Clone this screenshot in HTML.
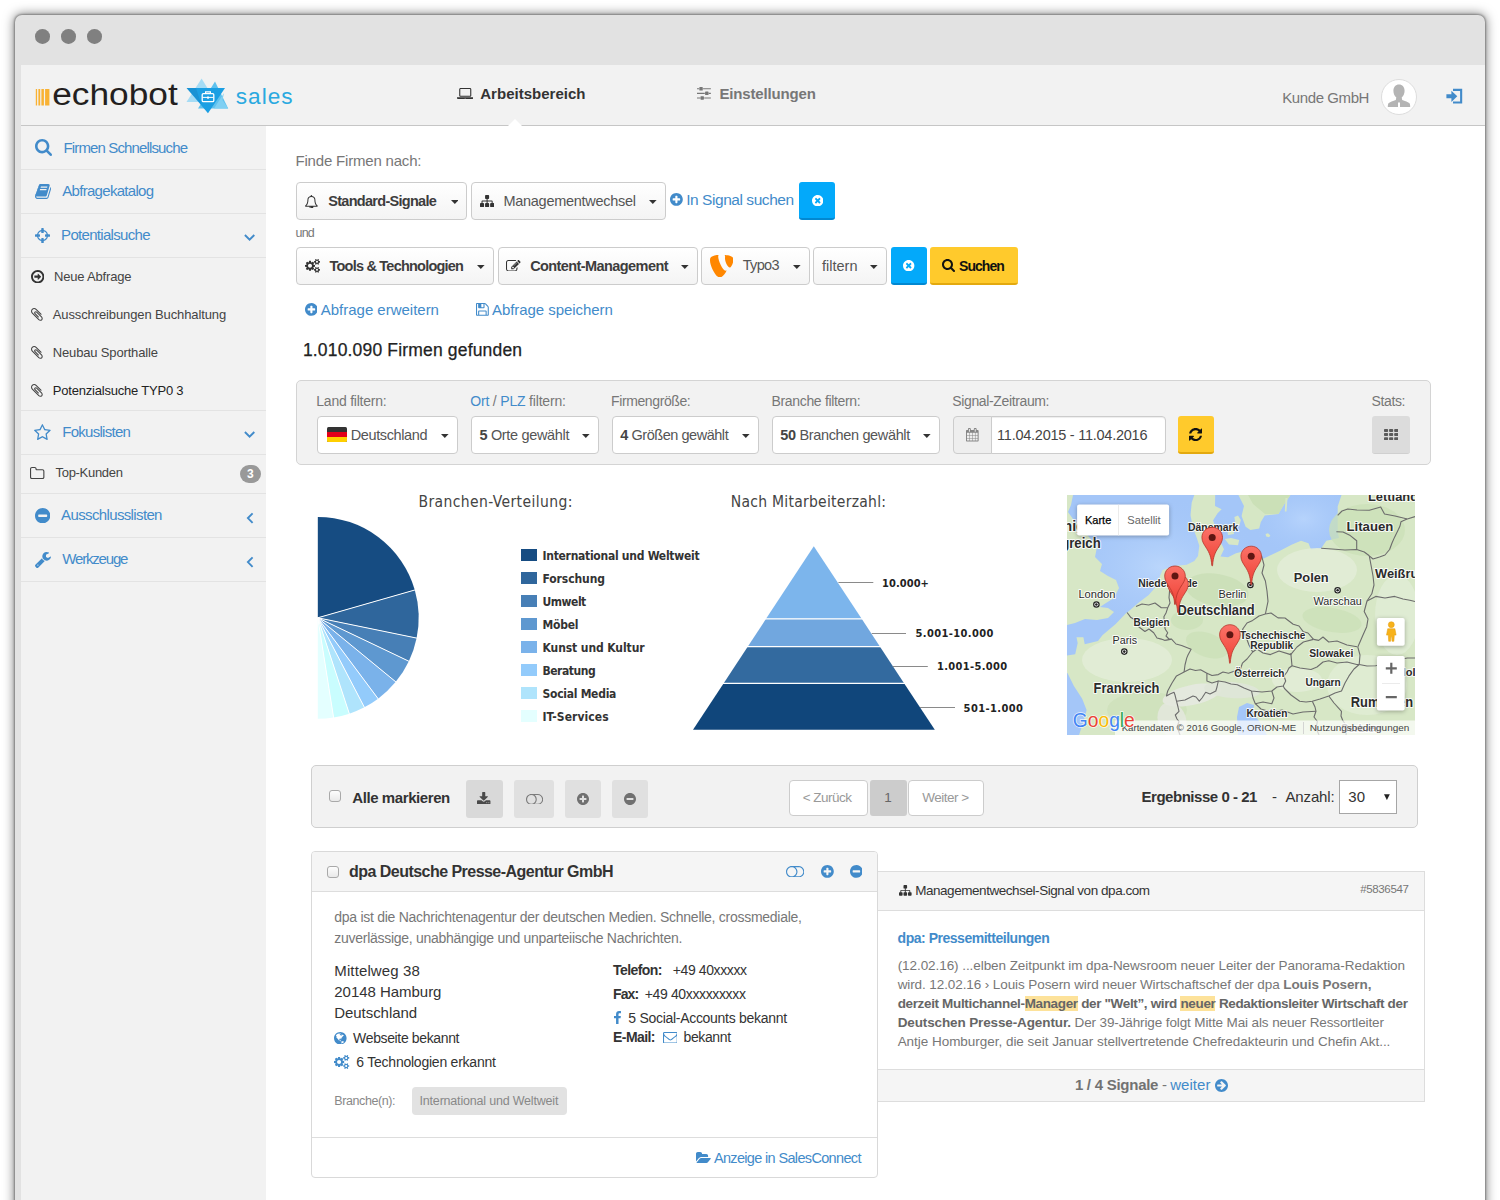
<!DOCTYPE html>
<html lang="de"><head><meta charset="utf-8"><title>echobot sales</title>
<style>
html,body{margin:0;padding:0;background:#fff;}
body{width:1500px;height:1200px;overflow:hidden;font-family:"Liberation Sans",sans-serif;}
#page{position:relative;width:1500px;height:1200px;overflow:hidden;}
#page>*{position:absolute;margin:0;padding:0;}
#page>svg{display:block;}
.t{white-space:nowrap;text-decoration:none;font-weight:400;}
.t b{font-weight:700;}

</style></head>
<body>
<div id="page">
<div style="left:15px;top:15px;width:1470px;height:1200px;background:#e2e2e2;border-radius:7px 7px 0 0;box-shadow:0 0 11px 1px rgba(0,0,0,.5),0 0 2px 1px rgba(0,0,0,.3);"></div>
<div style="left:35.300000000000004px;top:28.999999999999996px;width:14.6px;height:14.6px;background:#808080;border-radius:50%;"></div>
<div style="left:61.3px;top:28.999999999999996px;width:14.6px;height:14.6px;background:#808080;border-radius:50%;"></div>
<div style="left:87.3px;top:28.999999999999996px;width:14.6px;height:14.6px;background:#808080;border-radius:50%;"></div>
<header style="left:21px;top:65px;width:1464px;height:60px;background:#f2f2f2;border-bottom:1px solid #c6c6c6;"></header>
<main style="left:266px;top:126px;width:1219px;height:1080px;background:#fff;"></main>
<nav style="left:21px;top:126px;width:245px;height:1080px;background:#f2f2f2;"></nav>
<svg style="left:508px;top:119px" width="14" height="7" viewBox="0 0 14 7"><path d="M0 7L7 0L14 7Z" fill="#fff"/></svg>
<svg style="left:35px;top:88px" width="16" height="19" viewBox="35 88 16 19"><path d="M35.8 89h1.3v16.500h-1.300zM38.400 89h1.800v16.500h-1.800zM41.400 89h2.500v16.500h-2.500zM45.100 89h4.300v16.500h-4.300z" fill="#f9b233"/></svg>
<svg style="left:50px;top:76px" width="135" height="36" viewBox="0 0 135 36"><defs><clipPath id="lc"><rect x="0" y="8.2" width="135" height="28"/></clipPath></defs><text clip-path="url(#lc)" x="2.2" y="29.2" font-family="Liberation Sans, sans-serif" font-size="31" fill="#231f20" textLength="125.5" lengthAdjust="spacingAndGlyphs">echobot</text></svg>
<svg style="left:184px;top:76px" width="48" height="40" viewBox="184 76 48 40">
<polygon points="201.6,78.4 186.5,102 216,102" fill="#a6dcf5"/>
<polygon points="215,81.6 198,108.6 228.2,108.6" fill="#5ec1ee"/>
<polygon points="224,93 214,108.6 228.2,108.6 222.5,100" fill="#7fd0f3"/>
<polygon points="186.6,88 225,88 208,113.2" fill="#1b9fe3"/>
<polygon points="186.6,88 196,88 201,104" fill="#1787c9" opacity=".55"/>
<rect x="202.2" y="93.6" width="11.6" height="8" rx="1.2" fill="none" stroke="#fff" stroke-width="1.3"/>
<path d="M205.6 93.4v-1.6h4.8v1.6" fill="none" stroke="#fff" stroke-width="1.2"/>
<path d="M202.4 97.4h11.2" stroke="#fff" stroke-width="1"/>
<rect x="207" y="96.6" width="2" height="2" fill="#fff"/>
</svg>
<span class="t" style="left:235.81px;top:82px;font-size:22.6px;line-height:29px;color:#2aa9e0;letter-spacing:1.012px;">sales</span>
<svg style="left:456.65px;top:88px;" width="16.5" height="11" viewBox="0 256 1920 1280" preserveAspectRatio="none"><path fill="#333" d="M416 1280H1504C1592 1280 1664 1208 1664 1120V416C1664 328 1592 256 1504 256H416C328 256 256 328 256 416V1120C256 1208 328 1280 416 1280ZM384 416C384 399 399 384 416 384H1504C1521 384 1536 399 1536 416V1120C1536 1137 1521 1152 1504 1152H416C399 1152 384 1137 384 1120ZM1760 1344H160H0V1440C0 1493 72 1536 160 1536H1760C1848 1536 1920 1493 1920 1440V1344ZM1040 1440H880C871 1440 864 1433 864 1424C864 1415 871 1408 880 1408H1040C1049 1408 1056 1415 1056 1424C1056 1433 1049 1440 1040 1440Z"/></svg>
<span class="t" style="left:480.28px;top:84px;font-size:15px;line-height:19px;color:#333;font-weight:700;letter-spacing:0.012px;">Arbeitsbereich</span>
<svg style="left:697.07px;top:87.3px;" width="13.86" height="12.7" viewBox="0 256 1536 1408" preserveAspectRatio="none"><path fill="#777" d="M352 1408H0V1536H352ZM704 1280H448C413 1280 384 1309 384 1344V1600C384 1635 413 1664 448 1664H704C739 1664 768 1635 768 1600V1344C768 1309 739 1280 704 1280ZM864 896H0V1024H864ZM224 384H0V512H224ZM1536 1408H800V1536H1536ZM576 256H320C285 256 256 285 256 320V576C256 611 285 640 320 640H576C611 640 640 611 640 576V320C640 285 611 256 576 256ZM1216 768H960C925 768 896 797 896 832V1088C896 1123 925 1152 960 1152H1216C1251 1152 1280 1123 1280 1088V832C1280 797 1251 768 1216 768ZM1536 896H1312V1024H1536ZM1536 384H672V512H1536Z"/></svg>
<span class="t" style="left:719.48px;top:84px;font-size:15px;line-height:19px;color:#777;font-weight:700;letter-spacing:-0.154px;">Einstellungen</span>
<span class="t" style="left:1282.27px;top:88px;font-size:15px;line-height:19px;color:#777;letter-spacing:-0.410px;">Kunde GmbH</span>
<div style="left:1380.5px;top:78.5px;width:36px;height:36px;background:#fff;border:1px solid #ddd;border-radius:50%;box-sizing:border-box;overflow:hidden;"><svg width="34" height="34" viewBox="0 0 34 34" style="position:absolute;left:0;top:0"><path d="M17 4.5c-3.4 0-5.6 2.600-5.600 6.200 0 2.800 1.200 5.400 2.900 6.800l-.5 2.400c-2.400 1-6.400 2-7.300 3.400-.6 1-.7 2.600-.7 3.700h22.400c0-1.100-.1-2.700-.7-3.700-.9-1.400-4.900-2.400-7.300-3.400l-.5-2.400c1.700-1.400 2.900-4 2.900-6.800 0-3.600-2.200-6.200-5.600-6.200z" fill="#b4b4b4"/><path d="M16 22.600h2v4.400h-2z" fill="#fff"/></svg></div>
<svg style="left:1445px;top:87px" width="19" height="19" viewBox="1445 87 19 19"><path d="M1453 88.800h9.200v14.800h-9.200v-2.100h7.100v-10.600h-7.100zM1446.400 94.300h5v-3.600l5.900 5.600-5.900 5.600v-3.600h-5z" fill="#428bca"/></svg>
<div style="left:21px;top:169px;width:245px;height:1px;background:#e3e3e3;"></div>
<div style="left:21px;top:213px;width:245px;height:1px;background:#e3e3e3;"></div>
<div style="left:21px;top:257px;width:245px;height:1px;background:#e3e3e3;"></div>
<div style="left:21px;top:410px;width:245px;height:1px;background:#e3e3e3;"></div>
<div style="left:21px;top:454px;width:245px;height:1px;background:#e3e3e3;"></div>
<div style="left:21px;top:493px;width:245px;height:1px;background:#e3e3e3;"></div>
<div style="left:21px;top:537px;width:245px;height:1px;background:#e3e3e3;"></div>
<div style="left:21px;top:581px;width:245px;height:1px;background:#e3e3e3;"></div>
<svg style="left:35px;top:139px;" width="17" height="17" viewBox="0 128 1664 1664" preserveAspectRatio="none"><path fill="#428bca" d="M1152 832C1152 1079 951 1280 704 1280C457 1280 256 1079 256 832C256 585 457 384 704 384C951 384 1152 585 1152 832ZM1664 1664C1664 1630 1650 1597 1627 1574L1284 1231C1365 1114 1408 974 1408 832C1408 443 1093 128 704 128C315 128 0 443 0 832C0 1221 315 1536 704 1536C846 1536 986 1493 1103 1412L1446 1754C1469 1778 1502 1792 1536 1792C1606 1792 1664 1734 1664 1664Z"/></svg>
<a class="t" style="left:63.48px;top:138px;font-size:15px;line-height:19px;color:#428bca;letter-spacing:-0.859px;">Firmen Schnellsuche</a>
<svg style="left:34.57px;top:184px;" width="16.26" height="15" viewBox="-0.262509 128 1664.38 1536" preserveAspectRatio="none"><path fill="#428bca" d="M1639 478C1624 458 1603 444 1580 435C1581 453 1581 473 1575 492L1275 1479C1264 1515 1221 1536 1184 1536H261C206 1536 137 1524 117 1466C109 1444 110 1435 118 1423C127 1411 143 1408 156 1408H1025C1152 1408 1178 1374 1225 1220L1499 314C1513 267 1507 220 1481 184C1456 149 1414 128 1367 128H606C589 128 572 133 555 137L556 134C429 98 421 235 379 297C363 320 339 340 335 359C332 377 342 394 340 411C334 464 294 559 270 592C255 612 233 622 226 645C220 661 230 684 228 705C223 752 188 841 161 887C151 905 132 919 127 938C122 955 132 977 127 996C116 1048 82 1129 52 1179C36 1206 15 1223 11 1247C9 1259 18 1272 17 1288C16 1312 12 1332 10 1352C-4 1390 -4 1434 12 1479C49 1583 158 1664 260 1664H1183C1269 1664 1357 1598 1382 1513L1657 607C1671 561 1664 514 1639 478ZM575 480 596 416C602 398 621 384 638 384H1246C1264 384 1274 398 1268 416L1247 480C1241 498 1222 512 1205 512H597C579 512 569 498 575 480ZM492 736 513 672C519 654 538 640 555 640H1163C1181 640 1191 654 1185 672L1164 736C1158 754 1139 768 1122 768H514C496 768 486 754 492 736Z"/></svg>
<a class="t" style="left:62.27px;top:181px;font-size:15px;line-height:19px;color:#428bca;letter-spacing:-0.700px;">Abfragekatalog</a>
<svg style="left:34.7px;top:228px;" width="15" height="15" viewBox="0 128 1536 1536" preserveAspectRatio="none"><path fill="#428bca" d="M1197 1024C1154 1168 1040 1282 896 1325V1216C896 1181 867 1152 832 1152H704C669 1152 640 1181 640 1216V1325C496 1282 382 1168 339 1024H448C483 1024 512 995 512 960V832C512 797 483 768 448 768H339C382 624 496 510 640 467V576C640 611 669 640 704 640H832C867 640 896 611 896 576V467C1040 510 1154 624 1197 768H1088C1053 768 1024 797 1024 832V960C1024 995 1053 1024 1088 1024H1197ZM1536 832C1536 797 1507 768 1472 768H1329C1280 553 1111 384 896 335V192C896 157 867 128 832 128H704C669 128 640 157 640 192V335C425 384 256 553 207 768H64C29 768 0 797 0 832V960C0 995 29 1024 64 1024H207C256 1239 425 1408 640 1457V1600C640 1635 669 1664 704 1664H832C867 1664 896 1635 896 1600V1457C1111 1408 1280 1239 1329 1024H1472C1507 1024 1536 995 1536 960Z"/></svg>
<a class="t" style="left:61.08px;top:225px;font-size:15px;line-height:19px;color:#428bca;letter-spacing:-0.693px;">Potentialsuche</a>
<svg style="left:242px;top:232px" width="16" height="12" viewBox="242 232 16 12"><path d="M244.9 235l4.7 4.7 4.7-4.7" fill="none" stroke="#428bca" stroke-width="1.9"/></svg>
<svg style="left:30.5px;top:269.6px;" width="13.4" height="13.4" viewBox="0 128 1536 1536" preserveAspectRatio="none"><path fill="#333" d="M1152 896C1152 888 1149 879 1143 873L824 554C817 548 809 544 800 544C782 544 768 558 768 576V768H416C399 768 384 783 384 800V992C384 1009 399 1024 416 1024H768V1216C768 1233 783 1248 800 1248C808 1248 817 1245 823 1239L1143 919C1149 913 1152 904 1152 896ZM1312 896C1312 1196 1068 1440 768 1440C468 1440 224 1196 224 896C224 596 468 352 768 352C1068 352 1312 596 1312 896ZM1536 896C1536 472 1192 128 768 128C344 128 0 472 0 896C0 1320 344 1664 768 1664C1192 1664 1536 1320 1536 896Z"/></svg>
<a class="t" style="left:53.95px;top:268px;font-size:13px;line-height:17px;color:#444;letter-spacing:-0.174px;">Neue Abfrage</a>
<svg style="left:30.84px;top:307.8px;" width="11.72" height="12.8" viewBox="4 132 1400 1528" preserveAspectRatio="none"><path fill="#444" d="M1404 1385C1404 1297 1367 1212 1304 1150L723 569C684 529 630 506 574 506C464 506 378 592 378 702C378 757 401 812 441 851L851 1261C857 1267 865 1271 873 1271C894 1271 951 1214 951 1193C951 1185 947 1177 941 1171L531 761C516 745 506 724 506 702C506 663 535 635 573 635C595 635 617 644 633 659L1214 1240C1252 1278 1277 1330 1277 1385C1277 1470 1214 1533 1129 1533C1075 1533 1022 1508 984 1470L208 693C160 645 132 580 132 512C132 371 242 256 384 256C452 256 517 286 565 333L1171 940C1177 946 1185 950 1194 950C1215 950 1271 894 1271 873C1271 865 1267 857 1261 851L656 245C583 173 485 132 383 132C171 132 4 301 4 513C4 614 46 712 117 784L894 1560C956 1622 1041 1660 1129 1660C1285 1660 1404 1541 1404 1385Z"/></svg>
<a class="t" style="left:52.75px;top:306px;font-size:13px;line-height:17px;color:#444;letter-spacing:-0.114px;">Ausschreibungen Buchhaltung</a>
<svg style="left:30.84px;top:345.8px;" width="11.72" height="12.8" viewBox="4 132 1400 1528" preserveAspectRatio="none"><path fill="#444" d="M1404 1385C1404 1297 1367 1212 1304 1150L723 569C684 529 630 506 574 506C464 506 378 592 378 702C378 757 401 812 441 851L851 1261C857 1267 865 1271 873 1271C894 1271 951 1214 951 1193C951 1185 947 1177 941 1171L531 761C516 745 506 724 506 702C506 663 535 635 573 635C595 635 617 644 633 659L1214 1240C1252 1278 1277 1330 1277 1385C1277 1470 1214 1533 1129 1533C1075 1533 1022 1508 984 1470L208 693C160 645 132 580 132 512C132 371 242 256 384 256C452 256 517 286 565 333L1171 940C1177 946 1185 950 1194 950C1215 950 1271 894 1271 873C1271 865 1267 857 1261 851L656 245C583 173 485 132 383 132C171 132 4 301 4 513C4 614 46 712 117 784L894 1560C956 1622 1041 1660 1129 1660C1285 1660 1404 1541 1404 1385Z"/></svg>
<a class="t" style="left:52.75px;top:344px;font-size:13px;line-height:17px;color:#444;letter-spacing:-0.156px;">Neubau Sporthalle</a>
<svg style="left:30.84px;top:384.2px;" width="11.72" height="12.8" viewBox="4 132 1400 1528" preserveAspectRatio="none"><path fill="#444" d="M1404 1385C1404 1297 1367 1212 1304 1150L723 569C684 529 630 506 574 506C464 506 378 592 378 702C378 757 401 812 441 851L851 1261C857 1267 865 1271 873 1271C894 1271 951 1214 951 1193C951 1185 947 1177 941 1171L531 761C516 745 506 724 506 702C506 663 535 635 573 635C595 635 617 644 633 659L1214 1240C1252 1278 1277 1330 1277 1385C1277 1470 1214 1533 1129 1533C1075 1533 1022 1508 984 1470L208 693C160 645 132 580 132 512C132 371 242 256 384 256C452 256 517 286 565 333L1171 940C1177 946 1185 950 1194 950C1215 950 1271 894 1271 873C1271 865 1267 857 1261 851L656 245C583 173 485 132 383 132C171 132 4 301 4 513C4 614 46 712 117 784L894 1560C956 1622 1041 1660 1129 1660C1285 1660 1404 1541 1404 1385Z"/></svg>
<a class="t" style="left:52.75px;top:382px;font-size:13px;line-height:17px;color:#222;letter-spacing:-0.205px;">Potenzialsuche TYP0 3</a>
<svg style="left:34.41px;top:424px;" width="16.78" height="16" viewBox="0 32 1664 1587" preserveAspectRatio="none"><path fill="#428bca" d="M1137 1004 1209 1425 832 1226 454 1425 527 1004 221 707 643 645 832 263 1021 645 1443 707ZM1664 647C1664 617 1632 605 1608 601L1106 528L881 73C872 54 855 32 832 32C809 32 792 54 783 73L558 528L56 601C31 605 0 617 0 647C0 665 13 682 25 695L389 1049L303 1549C302 1556 301 1562 301 1569C301 1595 314 1619 343 1619C357 1619 370 1614 383 1607L832 1371L1281 1607C1293 1614 1307 1619 1321 1619C1350 1619 1362 1596 1362 1569C1362 1562 1362 1556 1361 1549L1275 1049L1638 695C1651 682 1664 665 1664 647Z"/></svg>
<a class="t" style="left:62.27px;top:422px;font-size:15px;line-height:19px;color:#428bca;letter-spacing:-0.727px;">Fokuslisten</a>
<svg style="left:242px;top:429px" width="16" height="12" viewBox="242 429 16 12"><path d="M244.9 432l4.7 4.7 4.7-4.7" fill="none" stroke="#428bca" stroke-width="1.9"/></svg>
<svg style="left:30.49px;top:467px;" width="14.42" height="12.2" viewBox="0 128 1664 1408" preserveAspectRatio="none"><path fill="#444" d="M1536 1312C1536 1365 1493 1408 1440 1408H224C171 1408 128 1365 128 1312V352C128 299 171 256 224 256H544C597 256 640 299 640 352V416C640 469 683 512 736 512H1440C1493 512 1536 555 1536 608V1312ZM1664 608C1664 485 1563 384 1440 384H768V352C768 229 667 128 544 128H224C101 128 0 229 0 352V1312C0 1435 101 1536 224 1536H1440C1563 1536 1664 1435 1664 1312Z"/></svg>
<a class="t" style="left:55.55px;top:464px;font-size:13px;line-height:17px;color:#444;letter-spacing:-0.303px;">Top-Kunden</a>
<div style="left:240px;top:465px;width:21px;height:17.6px;background:#999;border-radius:9px;"></div>
<span class="t" style="left:246.88px;top:466px;font-size:12px;line-height:16px;color:#fff;font-weight:700;">3</span>
<svg style="left:34.5px;top:508px;" width="15.4" height="15.4" viewBox="0 128 1536 1536" preserveAspectRatio="none"><path fill="#428bca" d="M1216 960C1216 995 1187 1024 1152 1024H384C349 1024 320 995 320 960V832C320 797 349 768 384 768H1152C1187 768 1216 797 1216 832V960ZM1536 896C1536 472 1192 128 768 128C344 128 0 472 0 896C0 1320 344 1664 768 1664C1192 1664 1536 1320 1536 896Z"/></svg>
<a class="t" style="left:61.08px;top:505px;font-size:15px;line-height:19px;color:#428bca;letter-spacing:-0.633px;">Ausschlusslisten</a>
<svg style="left:244px;top:511px" width="12" height="14" viewBox="244 511 12 14"><path d="M252.6 513.4l-4.700 4.700 4.700 4.700" fill="none" stroke="#428bca" stroke-width="1.900"/></svg>
<svg style="left:35.01px;top:552px;" width="15.98" height="16" viewBox="21 128 1641 1643" preserveAspectRatio="none"><path fill="#428bca" d="M384 1472C384 1507 355 1536 320 1536C285 1536 256 1507 256 1472C256 1437 285 1408 320 1408C355 1408 384 1437 384 1472ZM1028 1052C897 1000 792 895 740 764L59 1445C35 1469 21 1502 21 1536C21 1570 35 1603 59 1626L165 1734C189 1757 222 1771 256 1771C290 1771 323 1757 346 1734L1028 1052ZM1662 617C1662 597 1650 582 1630 582C1610 582 1378 728 1345 747L1152 640V416L1445 247C1454 241 1461 230 1461 219C1461 207 1455 198 1445 191C1384 150 1289 128 1216 128C969 128 768 329 768 576C768 823 969 1024 1216 1024C1405 1024 1576 901 1639 723C1650 691 1662 650 1662 617Z"/></svg>
<a class="t" style="left:62.27px;top:549px;font-size:15px;line-height:19px;color:#428bca;letter-spacing:-1.174px;">Werkzeuge</a>
<svg style="left:244px;top:555px" width="12" height="14" viewBox="244 555 12 14"><path d="M252.6 557.4l-4.700 4.700 4.700 4.700" fill="none" stroke="#428bca" stroke-width="1.900"/></svg>
<span class="t" style="left:295.48px;top:151px;font-size:15px;line-height:19px;color:#777;letter-spacing:-0.190px;">Finde Firmen nach:</span>
<div style="left:296px;top:182px;width:170.7px;height:38px;background:linear-gradient(#fff,#f4f4f4);border:1px solid #ccc;border-radius:4px;box-sizing:border-box;"></div>
<svg style="left:304.99px;top:194.6px;" width="12.82" height="13.8" viewBox="64 0 1664 1792" preserveAspectRatio="none"><path fill="#333" d="M912 1696C912 1705 905 1712 896 1712C799 1712 720 1633 720 1536C720 1527 727 1520 736 1520C745 1520 752 1527 752 1536C752 1615 817 1680 896 1680C905 1680 912 1687 912 1696ZM246 1408C425 1206 512 932 512 576C512 447 634 256 896 256C1158 256 1280 447 1280 576C1280 932 1367 1206 1546 1408ZM1728 1408C1580 1283 1408 1059 1408 576C1408 384 1249 174 984 135C989 123 992 110 992 96C992 43 949 0 896 0C843 0 800 43 800 96C800 110 803 123 808 135C543 174 384 384 384 576C384 1059 212 1283 64 1408C64 1478 122 1536 192 1536H640C640 1677 755 1792 896 1792C1037 1792 1152 1677 1152 1536H1600C1670 1536 1728 1478 1728 1408Z"/></svg>
<span class="t" style="left:328.29px;top:192px;font-size:14.5px;line-height:18px;color:#3d3d3d;font-weight:700;letter-spacing:-0.717px;">Standard-Signale</span>
<svg style="left:450.6px;top:200.2px" width="7.6" height="4" viewBox="0 0 8 4"><path d="M0 0h8L4 4z" fill="#333"/></svg>
<div style="left:471.2px;top:182px;width:194.8px;height:38px;background:linear-gradient(#fff,#f4f4f4);border:1px solid #ccc;border-radius:4px;box-sizing:border-box;"></div>
<svg style="left:479.6px;top:194.81px;" width="14.2" height="12.18" viewBox="0 128 1792 1536" preserveAspectRatio="none"><path fill="#333" d="M1792 1248C1792 1195 1749 1152 1696 1152H1600V960C1600 890 1542 832 1472 832H960V640H1056C1109 640 1152 597 1152 544V224C1152 171 1109 128 1056 128H736C683 128 640 171 640 224V544C640 597 683 640 736 640H832V832H320C250 832 192 890 192 960V1152H96C43 1152 0 1195 0 1248V1568C0 1621 43 1664 96 1664H416C469 1664 512 1621 512 1568V1248C512 1195 469 1152 416 1152H320V960H832V1152H736C683 1152 640 1195 640 1248V1568C640 1621 683 1664 736 1664H1056C1109 1664 1152 1621 1152 1568V1248C1152 1195 1109 1152 1056 1152H960V960H1472V1152H1376C1323 1152 1280 1195 1280 1248V1568C1280 1621 1323 1664 1376 1664H1696C1749 1664 1792 1621 1792 1568Z"/></svg>
<span class="t" style="left:503.49px;top:192px;font-size:14.5px;line-height:18px;color:#555;letter-spacing:-0.283px;">Managementwechsel</span>
<svg style="left:649.3px;top:200.2px" width="7.6" height="4" viewBox="0 0 8 4"><path d="M0 0h8L4 4z" fill="#333"/></svg>
<svg style="left:669.9px;top:193.4px;" width="12.8" height="12.8" viewBox="0 128 1536 1536" preserveAspectRatio="none"><path fill="#428bca" d="M1216 960C1216 995 1187 1024 1152 1024H896V1280C896 1315 867 1344 832 1344H704C669 1344 640 1315 640 1280V1024H384C349 1024 320 995 320 960V832C320 797 349 768 384 768H640V512C640 477 669 448 704 448H832C867 448 896 477 896 512V768H1152C1187 768 1216 797 1216 832V960ZM1536 896C1536 472 1192 128 768 128C344 128 0 472 0 896C0 1320 344 1664 768 1664C1192 1664 1536 1320 1536 896Z"/></svg>
<a class="t" style="left:686.16px;top:189px;font-size:15.5px;line-height:21px;color:#428bca;letter-spacing:-0.441px;">In Signal suchen</a>
<div style="left:799px;top:182px;width:36px;height:38px;background:#03a9fa;border-bottom:2px solid #0288d1;border-radius:3px;box-sizing:border-box;"></div>
<svg style="left:811.8px;top:195px;" width="11.4" height="11.4" viewBox="0 128 1536 1536" preserveAspectRatio="none"><path fill="#fff" d="M1149 1122C1149 1139 1142 1156 1130 1168L1040 1258C1028 1270 1011 1277 994 1277C977 1277 961 1270 949 1258L768 1077L587 1258C575 1270 559 1277 542 1277C525 1277 508 1270 496 1258L406 1168C394 1156 387 1139 387 1122C387 1105 394 1089 406 1077L587 896L406 715C394 703 387 687 387 670C387 653 394 636 406 624L496 534C508 522 525 515 542 515C559 515 575 522 587 534L768 715L949 534C961 522 977 515 994 515C1011 515 1028 522 1040 534L1130 624C1142 636 1149 653 1149 670C1149 687 1142 703 1130 715L949 896L1130 1077C1142 1089 1149 1105 1149 1122ZM1536 896C1536 472 1192 128 768 128C344 128 0 472 0 896C0 1320 344 1664 768 1664C1192 1664 1536 1320 1536 896Z"/></svg>
<span class="t" style="left:295.56px;top:225px;font-size:12.5px;line-height:16px;color:#777;letter-spacing:-0.830px;">und</span>
<div style="left:296px;top:247px;width:197.6px;height:38px;background:linear-gradient(#fff,#f4f4f4);border:1px solid #ccc;border-radius:4px;box-sizing:border-box;"></div>
<svg style="left:304.5px;top:259.12px;" width="15" height="13.76" viewBox="0 16 1920 1761" preserveAspectRatio="none"><path fill="#333" d="M896 896C896 1037 781 1152 640 1152C499 1152 384 1037 384 896C384 755 499 640 640 640C781 640 896 755 896 896ZM1664 1408C1664 1478 1607 1536 1536 1536C1466 1536 1408 1479 1408 1408C1408 1338 1466 1280 1536 1280C1606 1280 1664 1338 1664 1408ZM1664 384C1664 454 1607 512 1536 512C1466 512 1408 455 1408 384C1408 314 1466 256 1536 256C1606 256 1664 314 1664 384ZM1280 805C1280 791 1270 778 1256 775L1104 752C1095 724 1083 697 1070 670C1098 631 1128 595 1157 556C1161 550 1164 544 1164 537C1164 509 1046 401 1020 377C1014 372 1007 369 999 369C992 369 985 371 979 376L861 465C837 453 812 442 786 434L763 281C761 267 747 256 733 256H547C533 256 521 266 517 280C504 329 499 384 494 434C467 443 442 453 417 466L302 376C296 372 289 369 281 369C252 369 140 490 120 517C115 523 113 530 113 537C113 544 116 551 120 557C152 595 182 632 210 672C197 697 186 722 178 748L23 772C10 774 0 789 0 802V987C0 1001 10 1014 24 1016L176 1040C185 1068 197 1095 211 1122C182 1161 152 1198 123 1236C119 1242 116 1248 116 1255C116 1284 234 1391 260 1415C266 1420 273 1423 281 1423C288 1423 296 1421 301 1416L419 1327C443 1339 468 1350 494 1358L517 1511C519 1525 533 1536 547 1536H733C747 1536 759 1526 763 1512C776 1463 781 1408 786 1357C813 1349 838 1339 863 1326L978 1416C984 1420 991 1423 999 1423C1028 1423 1140 1301 1160 1274C1165 1269 1167 1262 1167 1255C1167 1247 1164 1241 1160 1235C1128 1197 1098 1160 1070 1120C1083 1095 1094 1070 1102 1044L1257 1020C1270 1018 1280 1003 1280 990ZM1920 1338C1920 1323 1791 1309 1771 1307C1763 1289 1753 1271 1741 1255C1750 1235 1792 1135 1792 1117C1792 1115 1791 1112 1788 1110C1776 1103 1669 1040 1664 1040L1658 1042C1624 1076 1594 1115 1566 1154C1556 1153 1546 1152 1536 1152C1526 1152 1516 1153 1506 1154C1496 1139 1421 1040 1408 1040C1403 1040 1296 1104 1284 1110C1281 1112 1280 1115 1280 1117C1280 1134 1322 1235 1331 1255C1319 1271 1309 1289 1301 1307C1281 1309 1152 1323 1152 1338V1478C1152 1493 1281 1507 1301 1509C1309 1528 1319 1545 1331 1561C1322 1581 1280 1682 1280 1699C1280 1701 1281 1704 1284 1706C1296 1713 1403 1777 1408 1777C1421 1777 1496 1677 1506 1662C1516 1663 1526 1664 1536 1664C1546 1664 1556 1663 1566 1662C1576 1677 1651 1777 1664 1777C1669 1777 1776 1713 1788 1706C1791 1704 1792 1702 1792 1699C1792 1681 1750 1581 1741 1561C1753 1545 1763 1528 1771 1509C1791 1507 1920 1493 1920 1478ZM1920 314C1920 299 1791 285 1771 283C1763 265 1753 247 1741 231C1750 211 1792 111 1792 93C1792 91 1791 88 1788 86C1776 79 1669 16 1664 16L1658 18C1624 52 1594 91 1566 130C1556 129 1546 128 1536 128C1526 128 1516 129 1506 130C1496 115 1421 16 1408 16C1403 16 1296 80 1284 86C1281 88 1280 91 1280 93C1280 110 1322 211 1331 231C1319 247 1309 265 1301 283C1281 285 1152 299 1152 314V454C1152 469 1281 483 1301 485C1309 504 1319 521 1331 537C1322 557 1280 658 1280 675C1280 677 1281 680 1284 682C1296 689 1403 753 1408 753C1421 753 1496 653 1506 638C1516 639 1526 640 1536 640C1546 640 1556 639 1566 638C1576 653 1651 753 1664 753C1669 753 1776 689 1788 682C1791 680 1792 678 1792 675C1792 657 1750 557 1741 537C1753 521 1763 504 1771 485C1791 483 1920 469 1920 454Z"/></svg>
<span class="t" style="left:329.49px;top:257px;font-size:14.5px;line-height:18px;color:#3d3d3d;font-weight:700;letter-spacing:-0.779px;">Tools &amp; Technologien</span>
<svg style="left:477.3px;top:265px" width="7.6" height="4" viewBox="0 0 8 4"><path d="M0 0h8L4 4z" fill="#333"/></svg>
<div style="left:498px;top:247px;width:200px;height:38px;background:linear-gradient(#fff,#f4f4f4);border:1px solid #ccc;border-radius:4px;box-sizing:border-box;"></div>
<svg style="left:506px;top:259.78px;" width="14.5" height="11.44" viewBox="0 128 1783.75 1408" preserveAspectRatio="none"><path fill="#333" d="M888 1184H832V1088H736V1032L852 916L1004 1068ZM1328 464C1337 473 1336 488 1327 497L977 847C968 856 953 857 944 848C935 839 936 824 945 815L1295 465C1304 456 1319 455 1328 464ZM1408 1058C1408 1045 1400 1034 1388 1029C1376 1024 1363 1026 1353 1036L1289 1100C1283 1106 1280 1114 1280 1122V1248C1280 1336 1208 1408 1120 1408H288C200 1408 128 1336 128 1248V416C128 328 200 256 288 256H1120C1135 256 1150 258 1165 262C1176 266 1188 263 1197 254L1246 205C1254 197 1257 187 1255 176C1253 166 1246 157 1237 153C1200 136 1160 128 1120 128H288C129 128 0 257 0 416V1248C0 1407 129 1536 288 1536H1120C1279 1536 1408 1407 1408 1248ZM1312 320 640 992V1280H928L1600 608ZM1756 452C1793 415 1793 353 1756 316L1604 164C1567 127 1505 127 1468 164L1376 256L1664 544L1756 452Z"/></svg>
<span class="t" style="left:530.19px;top:257px;font-size:14.5px;line-height:18px;color:#3d3d3d;font-weight:700;letter-spacing:-0.584px;">Content-Management</span>
<svg style="left:681.3px;top:265px" width="7.6" height="4" viewBox="0 0 8 4"><path d="M0 0h8L4 4z" fill="#333"/></svg>
<div style="left:701.3px;top:247px;width:108.3px;height:38px;background:linear-gradient(#fff,#f4f4f4);border:1px solid #ccc;border-radius:4px;box-sizing:border-box;"></div>
<svg style="left:709.5px;top:254.5px" width="23.5" height="22.6" viewBox="0 0 23.5 22.6"><path d="M16.600 15.500c-.35.1-.63.14-1 .14-3 0-7.400-10.400-7.400-13.900 0-1.300.3-1.700.73-2.100C5.300.07 1 1.400.3 3.100.1 3.600 0 4.400 0 5.400c0 5.400 5.800 17.100 9.900 17.100 1.900 0 5.100-3.100 6.700-7z" fill="#ff8700"/><path d="M14 0c3.800 0 9.500 1.100 9.500 4.200 0 3.800-2.400 8.400-3.600 8.400-2.200 0-4.900-6.100-4.900-9.100C15 1.600 15.500 0 14 0z" fill="#ff8700" transform="translate(0,0)"/></svg>
<span class="t" style="left:742.69px;top:256px;font-size:14.5px;line-height:18px;color:#555;letter-spacing:-0.675px;">Typo3</span>
<svg style="left:793.3px;top:265px" width="7.6" height="4" viewBox="0 0 8 4"><path d="M0 0h8L4 4z" fill="#333"/></svg>
<div style="left:813.3px;top:247px;width:73.4px;height:38px;background:linear-gradient(#fff,#f4f4f4);border:1px solid #ccc;border-radius:4px;box-sizing:border-box;"></div>
<span class="t" style="left:821.89px;top:257px;font-size:14.5px;line-height:18px;color:#555;letter-spacing:0.022px;">filtern</span>
<svg style="left:870px;top:265px" width="7.6" height="4" viewBox="0 0 8 4"><path d="M0 0h8L4 4z" fill="#333"/></svg>
<div style="left:891px;top:247px;width:36px;height:38px;background:#03a9fa;border-bottom:2px solid #0288d1;border-radius:3px;box-sizing:border-box;"></div>
<svg style="left:903.4px;top:260px;" width="11.4" height="11.4" viewBox="0 128 1536 1536" preserveAspectRatio="none"><path fill="#fff" d="M1149 1122C1149 1139 1142 1156 1130 1168L1040 1258C1028 1270 1011 1277 994 1277C977 1277 961 1270 949 1258L768 1077L587 1258C575 1270 559 1277 542 1277C525 1277 508 1270 496 1258L406 1168C394 1156 387 1139 387 1122C387 1105 394 1089 406 1077L587 896L406 715C394 703 387 687 387 670C387 653 394 636 406 624L496 534C508 522 525 515 542 515C559 515 575 522 587 534L768 715L949 534C961 522 977 515 994 515C1011 515 1028 522 1040 534L1130 624C1142 636 1149 653 1149 670C1149 687 1142 703 1130 715L949 896L1130 1077C1142 1089 1149 1105 1149 1122ZM1536 896C1536 472 1192 128 768 128C344 128 0 472 0 896C0 1320 344 1664 768 1664C1192 1664 1536 1320 1536 896Z"/></svg>
<div style="left:930px;top:247px;width:88px;height:38px;background:#ffca2c;border-bottom:2px solid #e3a90f;border-radius:3px;box-sizing:border-box;"></div>
<svg style="left:942.2px;top:259.3px;" width="13" height="13" viewBox="0 128 1664 1664" preserveAspectRatio="none"><path fill="#111" d="M1152 832C1152 1079 951 1280 704 1280C457 1280 256 1079 256 832C256 585 457 384 704 384C951 384 1152 585 1152 832ZM1664 1664C1664 1630 1650 1597 1627 1574L1284 1231C1365 1114 1408 974 1408 832C1408 443 1093 128 704 128C315 128 0 443 0 832C0 1221 315 1536 704 1536C846 1536 986 1493 1103 1412L1446 1754C1469 1778 1502 1792 1536 1792C1606 1792 1664 1734 1664 1664Z"/></svg>
<span class="t" style="left:959.01px;top:257px;font-size:14px;line-height:18px;color:#111;font-weight:700;letter-spacing:-0.956px;">Suchen</span>
<svg style="left:304.5px;top:303.4px;" width="12.8" height="12.8" viewBox="0 128 1536 1536" preserveAspectRatio="none"><path fill="#428bca" d="M1216 960C1216 995 1187 1024 1152 1024H896V1280C896 1315 867 1344 832 1344H704C669 1344 640 1315 640 1280V1024H384C349 1024 320 995 320 960V832C320 797 349 768 384 768H640V512C640 477 669 448 704 448H832C867 448 896 477 896 512V768H1152C1187 768 1216 797 1216 832V960ZM1536 896C1536 472 1192 128 768 128C344 128 0 472 0 896C0 1320 344 1664 768 1664C1192 1664 1536 1320 1536 896Z"/></svg>
<a class="t" style="left:320.78px;top:300px;font-size:15px;line-height:19px;color:#428bca;letter-spacing:-0.013px;">Abfrage erweitern</a>
<svg style="left:475.75px;top:303.4px;" width="12.8" height="12.8" viewBox="0 128 1536 1536" preserveAspectRatio="none"><path fill="#428bca" d="M384 1536V1152H1152V1536ZM1280 1536V1120C1280 1067 1237 1024 1184 1024H352C299 1024 256 1067 256 1120V1536H128V256H256V672C256 725 299 768 352 768H928C981 768 1024 725 1024 672V256C1044 256 1083 272 1097 286L1378 567C1391 580 1408 621 1408 640V1536ZM896 608C896 625 881 640 864 640H672C655 640 640 625 640 608V288C640 271 655 256 672 256H864C881 256 896 271 896 288V608ZM1536 640C1536 587 1506 514 1468 476L1188 196C1150 158 1077 128 1024 128H96C43 128 0 171 0 224V1568C0 1621 43 1664 96 1664H1440C1493 1664 1536 1621 1536 1568Z"/></svg>
<a class="t" style="left:491.98px;top:300px;font-size:15px;line-height:19px;color:#428bca;letter-spacing:-0.059px;">Abfrage speichern</a>
<h2 class="t" style="left:302.89px;top:339px;font-size:17.5px;line-height:22px;color:#222;letter-spacing:0.174px;-webkit-text-stroke:.25px #222;">1.010.090 Firmen gefunden</h2>
<div style="left:296px;top:380px;width:1135px;height:85px;background:#f2f2f2;border:1px solid #d4d4d4;border-radius:5px;box-sizing:border-box;"></div>
<span class="t" style="left:316.31px;top:392px;font-size:14px;line-height:18px;color:#777;letter-spacing:-0.231px;">Land filtern:</span>
<span class="t" style="left:470.31px;top:392px;font-size:14px;line-height:18px;color:#777;letter-spacing:-0.190px;"><span style="color:#428bca">Ort</span> / <span style="color:#428bca">PLZ</span> filtern:</span>
<span class="t" style="left:611.11px;top:392px;font-size:14px;line-height:18px;color:#777;letter-spacing:-0.403px;">Firmengröße:</span>
<span class="t" style="left:771.51px;top:392px;font-size:14px;line-height:18px;color:#777;letter-spacing:-0.331px;">Branche filtern:</span>
<span class="t" style="left:952.31px;top:392px;font-size:14px;line-height:18px;color:#777;letter-spacing:-0.367px;">Signal-Zeitraum:</span>
<span class="t" style="left:1371.51px;top:392px;font-size:14px;line-height:18px;color:#777;letter-spacing:-0.359px;">Stats:</span>
<div style="left:316.8px;top:416px;width:140.8px;height:38px;background:#fff;border:1px solid #ccc;border-radius:4px;box-sizing:border-box;"></div>
<svg style="left:327px;top:427px" width="20" height="15" viewBox="0 0 20 15"><rect width="20" height="15" rx="1.5" fill="#333"/><rect y="5" width="20" height="5" fill="#e2001a"/><rect y="10" width="20" height="5" rx="1.5" fill="#ffcf00"/><rect y="10" width="20" height="3" fill="#ffcf00"/></svg>
<span class="t" style="left:350.69px;top:426px;font-size:14.5px;line-height:18px;color:#555;letter-spacing:-0.381px;">Deutschland</span>
<svg style="left:441px;top:433.6px" width="7.6" height="4" viewBox="0 0 8 4"><path d="M0 0h8L4 4z" fill="#333"/></svg>
<div style="left:471.2px;top:416px;width:127.6px;height:38px;background:#fff;border:1px solid #ccc;border-radius:4px;box-sizing:border-box;"></div>
<span class="t" style="left:479.49px;top:426px;font-size:14.5px;line-height:18px;color:#555;letter-spacing:-0.333px;"><b style="color:#444">5</b> Orte gewählt</span>
<svg style="left:582px;top:433.6px" width="7.6" height="4" viewBox="0 0 8 4"><path d="M0 0h8L4 4z" fill="#333"/></svg>
<div style="left:612px;top:416px;width:147px;height:38px;background:#fff;border:1px solid #ccc;border-radius:4px;box-sizing:border-box;"></div>
<span class="t" style="left:620.29px;top:426px;font-size:14.5px;line-height:18px;color:#555;letter-spacing:-0.459px;"><b style="color:#444">4</b> Größen gewählt</span>
<svg style="left:742.4px;top:433.6px" width="7.6" height="4" viewBox="0 0 8 4"><path d="M0 0h8L4 4z" fill="#333"/></svg>
<div style="left:772px;top:416px;width:168px;height:38px;background:#fff;border:1px solid #ccc;border-radius:4px;box-sizing:border-box;"></div>
<span class="t" style="left:780.29px;top:426px;font-size:14.5px;line-height:18px;color:#555;letter-spacing:-0.347px;"><b style="color:#444">50</b> Branchen gewählt</span>
<svg style="left:923.2px;top:433.6px" width="7.6" height="4" viewBox="0 0 8 4"><path d="M0 0h8L4 4z" fill="#333"/></svg>
<div style="left:953px;top:416px;width:39px;height:38px;background:#eee;border:1px solid #ccc;border-radius:4px 0 0 4px;box-sizing:border-box;"></div>
<div style="left:991px;top:416px;width:175px;height:38px;background:#fff;border:1px solid #ccc;border-radius:0 4px 4px 0;box-sizing:border-box;box-shadow:inset 0 1px 1px rgba(0,0,0,.075);"></div>
<svg style="left:966.09px;top:428px;" width="12.62" height="13.6" viewBox="0 0 1664 1792" preserveAspectRatio="none"><path fill="#858585" d="M128 1664V1376H416V1664ZM480 1664V1376H800V1664ZM128 1312V992H416V1312ZM480 1312V992H800V1312ZM128 928V640H416V928ZM864 1664V1376H1184V1664ZM480 928V640H800V928ZM1248 1664V1376H1536V1664ZM864 1312V992H1184V1312ZM512 448C512 465 497 480 480 480H416C399 480 384 465 384 448V160C384 143 399 128 416 128H480C497 128 512 143 512 160V448ZM1248 1312V992H1536V1312ZM864 928V640H1184V928ZM1248 928V640H1536V928ZM1280 448C1280 465 1265 480 1248 480H1184C1167 480 1152 465 1152 448V160C1152 143 1167 128 1184 128H1248C1265 128 1280 143 1280 160V448ZM1664 384C1664 314 1606 256 1536 256H1408V160C1408 72 1336 0 1248 0H1184C1096 0 1024 72 1024 160V256H640V160C640 72 568 0 480 0H416C328 0 256 72 256 160V256H128C58 256 0 314 0 384V1664C0 1734 58 1792 128 1792H1536C1606 1792 1664 1734 1664 1664Z"/></svg>
<span class="t" style="left:997.09px;top:426px;font-size:14.5px;line-height:18px;color:#444;letter-spacing:-0.249px;">11.04.2015 - 11.04.2016</span>
<div style="left:1178px;top:416px;width:36px;height:38px;background:#ffca2c;border-bottom:2px solid #e3a90f;border-radius:3px;box-sizing:border-box;"></div>
<svg style="left:1189.2px;top:428px;" width="13.2" height="13.2" viewBox="0 128 1536 1536" preserveAspectRatio="none"><path fill="#111" d="M1511 1056C1511 1039 1497 1024 1479 1024H1287C1272 1024 1262 1033 1257 1047C1240 1087 1228 1125 1204 1164C1111 1316 946 1408 768 1408C639 1408 514 1358 420 1270L557 1133C569 1121 576 1105 576 1088C576 1053 547 1024 512 1024H64C29 1024 0 1053 0 1088V1536C0 1571 29 1600 64 1600C81 1600 97 1593 109 1581L238 1452C380 1587 569 1664 764 1664C1133 1664 1425 1417 1510 1063C1511 1061 1511 1058 1511 1056ZM1536 256C1536 221 1507 192 1472 192C1455 192 1439 199 1427 211L1297 340C1155 206 964 128 768 128C399 128 104 374 18 729C18 731 18 734 18 736C18 753 32 768 50 768H249C264 768 274 759 279 745C296 705 308 667 332 628C425 476 590 384 768 384C897 384 1022 433 1117 521L979 659C967 671 960 687 960 704C960 739 989 768 1024 768H1472C1507 768 1536 739 1536 704Z"/></svg>
<div style="left:1372px;top:416px;width:38px;height:38px;background:#dcdcdc;border-bottom:1px solid #d0d0d0;border-radius:3px;box-sizing:border-box;"></div>
<svg style="left:1383.67px;top:429.2px;" width="14.26" height="11.2" viewBox="0 128 1792 1408" preserveAspectRatio="none"><path fill="#5a5a5a" d="M512 1248C512 1195 469 1152 416 1152H96C43 1152 0 1195 0 1248V1440C0 1493 43 1536 96 1536H416C469 1536 512 1493 512 1440ZM512 736C512 683 469 640 416 640H96C43 640 0 683 0 736V928C0 981 43 1024 96 1024H416C469 1024 512 981 512 928ZM1152 1248C1152 1195 1109 1152 1056 1152H736C683 1152 640 1195 640 1248V1440C640 1493 683 1536 736 1536H1056C1109 1536 1152 1493 1152 1440ZM512 224C512 171 469 128 416 128H96C43 128 0 171 0 224V416C0 469 43 512 96 512H416C469 512 512 469 512 416ZM1152 736C1152 683 1109 640 1056 640H736C683 640 640 683 640 736V928C640 981 683 1024 736 1024H1056C1109 1024 1152 981 1152 928ZM1792 1248C1792 1195 1749 1152 1696 1152H1376C1323 1152 1280 1195 1280 1248V1440C1280 1493 1323 1536 1376 1536H1696C1749 1536 1792 1493 1792 1440ZM1152 224C1152 171 1109 128 1056 128H736C683 128 640 171 640 224V416C640 469 683 512 736 512H1056C1109 512 1152 469 1152 416ZM1792 736C1792 683 1749 640 1696 640H1376C1323 640 1280 683 1280 736V928C1280 981 1323 1024 1376 1024H1696C1749 1024 1792 981 1792 928ZM1792 224C1792 171 1749 128 1696 128H1376C1323 128 1280 171 1280 224V416C1280 469 1323 512 1376 512H1696C1749 512 1792 469 1792 416Z"/></svg>
<svg style="left:300px;top:500px" width="140" height="240" viewBox="300 500 140 240"><path d="M317.8 617.8L317.80 516.90A100.9 100.9 0 0 1 414.79 589.99Z" fill="#164c82"/><path d="M317.8 617.8L414.79 589.99A100.9 100.9 0 0 1 416.64 638.09Z" fill="#2f669c"/><path d="M317.8 617.8L416.64 638.09A100.9 100.9 0 0 1 408.87 661.24Z" fill="#477fb6"/><path d="M317.8 617.8L408.87 661.24A100.9 100.9 0 0 1 395.77 681.84Z" fill="#5e98d0"/><path d="M317.8 617.8L395.77 681.84A100.9 100.9 0 0 1 378.10 698.70Z" fill="#7ab2ea"/><path d="M317.8 617.8L378.10 698.70A100.9 100.9 0 0 1 364.39 707.30Z" fill="#93cbfb"/><path d="M317.8 617.8L364.39 707.30A100.9 100.9 0 0 1 349.31 713.65Z" fill="#afe4fc"/><path d="M317.8 617.8L349.31 713.65A100.9 100.9 0 0 1 333.58 717.46Z" fill="#c9fdfe"/><path d="M317.8 617.8L333.58 717.46A100.9 100.9 0 0 1 317.80 718.70Z" fill="#e4ffff"/><path d="M317.8 617.8L415.75 589.71" stroke="#fff" stroke-width="1" fill="none"/><path d="M317.8 617.8L417.62 638.29" stroke="#fff" stroke-width="1" fill="none"/><path d="M317.8 617.8L409.77 661.67" stroke="#fff" stroke-width="1" fill="none"/><path d="M317.8 617.8L396.54 682.48" stroke="#fff" stroke-width="1" fill="none"/><path d="M317.8 617.8L378.70 699.50" stroke="#fff" stroke-width="1" fill="none"/><path d="M317.8 617.8L364.85 708.19" stroke="#fff" stroke-width="1" fill="none"/><path d="M317.8 617.8L349.63 714.60" stroke="#fff" stroke-width="1" fill="none"/><path d="M317.8 617.8L333.74 718.45" stroke="#fff" stroke-width="1" fill="none"/></svg>
<span class="t" style="left:418.46px;top:492px;font-size:15.5px;line-height:20px;color:#444;font-family:'DejaVu Sans Condensed', 'DejaVu Sans', 'Liberation Sans', sans-serif;letter-spacing:0.399px;">Branchen-Verteilung:</span>
<div style="left:521px;top:549px;width:16px;height:12px;background:#164c82;"></div>
<span class="t" style="left:542.48px;top:548px;font-size:12px;line-height:16px;color:#333;font-weight:700;font-family:'DejaVu Sans Condensed', 'DejaVu Sans', 'Liberation Sans', sans-serif;letter-spacing:-0.271px;">International und Weltweit</span>
<div style="left:521px;top:572px;width:16px;height:12px;background:#2f669c;"></div>
<span class="t" style="left:542.48px;top:571px;font-size:12px;line-height:16px;color:#333;font-weight:700;font-family:'DejaVu Sans Condensed', 'DejaVu Sans', 'Liberation Sans', sans-serif;letter-spacing:-0.096px;">Forschung</span>
<div style="left:521px;top:595px;width:16px;height:12px;background:#477fb6;"></div>
<span class="t" style="left:542.48px;top:594px;font-size:12px;line-height:16px;color:#333;font-weight:700;font-family:'DejaVu Sans Condensed', 'DejaVu Sans', 'Liberation Sans', sans-serif;letter-spacing:-0.474px;">Umwelt</span>
<div style="left:521px;top:618px;width:16px;height:12px;background:#5e98d0;"></div>
<span class="t" style="left:542.48px;top:617px;font-size:12px;line-height:16px;color:#333;font-weight:700;font-family:'DejaVu Sans Condensed', 'DejaVu Sans', 'Liberation Sans', sans-serif;letter-spacing:-0.205px;">Möbel</span>
<div style="left:521px;top:641px;width:16px;height:12px;background:#7ab2ea;"></div>
<span class="t" style="left:542.48px;top:640px;font-size:12px;line-height:16px;color:#333;font-weight:700;font-family:'DejaVu Sans Condensed', 'DejaVu Sans', 'Liberation Sans', sans-serif;letter-spacing:-0.090px;">Kunst und Kultur</span>
<div style="left:521px;top:664px;width:16px;height:12px;background:#93cbfb;"></div>
<span class="t" style="left:542.48px;top:663px;font-size:12px;line-height:16px;color:#333;font-weight:700;font-family:'DejaVu Sans Condensed', 'DejaVu Sans', 'Liberation Sans', sans-serif;letter-spacing:-0.448px;">Beratung</span>
<div style="left:521px;top:687px;width:16px;height:12px;background:#afe4fc;"></div>
<span class="t" style="left:542.48px;top:686px;font-size:12px;line-height:16px;color:#333;font-weight:700;font-family:'DejaVu Sans Condensed', 'DejaVu Sans', 'Liberation Sans', sans-serif;letter-spacing:-0.265px;">Social Media</span>
<div style="left:521px;top:710px;width:16px;height:12px;background:#e4ffff;"></div>
<span class="t" style="left:542.48px;top:709px;font-size:12px;line-height:16px;color:#333;font-weight:700;font-family:'DejaVu Sans Condensed', 'DejaVu Sans', 'Liberation Sans', sans-serif;letter-spacing:0.078px;">IT-Services</span>
<span class="t" style="left:730.86px;top:492px;font-size:15.5px;line-height:20px;color:#444;font-family:'DejaVu Sans Condensed', 'DejaVu Sans', 'Liberation Sans', sans-serif;letter-spacing:0.259px;">Nach Mitarbeiterzahl:</span>
<svg style="left:690px;top:540px" width="280" height="195" viewBox="690 540 280 195"><path d="M813.80 546.2L813.80 546.2L861.65 618.8L766.03 618.8Z" fill="#7cb5ec"/><path d="M766.03 618.8L861.65 618.8L880.03 646.7L747.68 646.7Z" fill="#71a7df"/><path d="M747.68 646.7L880.03 646.7L904.22 683.4L723.53 683.4Z" fill="#336a9f"/><path d="M723.53 683.4L904.22 683.4L934.80 729.8L693.00 729.8Z" fill="#10467b"/><path d="M765.03 618.8H862.65" stroke="#fff" stroke-width="1.2"/><path d="M746.68 646.7H881.03" stroke="#fff" stroke-width="1.2"/><path d="M722.53 683.4H905.22" stroke="#fff" stroke-width="1.2"/><path d="M838.4 582.5H873.3" stroke="#8a8a8a" stroke-width="1"/><path d="M871.8 633.5H906" stroke="#8a8a8a" stroke-width="1"/><path d="M892.8 666.5H927.8" stroke="#8a8a8a" stroke-width="1"/><path d="M920 707.5H955" stroke="#8a8a8a" stroke-width="1"/></svg>
<span class="t" style="left:882.01px;top:576px;font-size:11px;line-height:15px;color:#222;font-weight:700;font-family:'DejaVu Sans Condensed', 'DejaVu Sans', 'Liberation Sans', sans-serif;letter-spacing:0.069px;">10.000+</span>
<span class="t" style="left:915.62px;top:626px;font-size:11px;line-height:15px;color:#222;font-weight:700;font-family:'DejaVu Sans Condensed', 'DejaVu Sans', 'Liberation Sans', sans-serif;letter-spacing:0.372px;">5.001-10.000</span>
<span class="t" style="left:936.91px;top:659px;font-size:11px;line-height:15px;color:#222;font-weight:700;font-family:'DejaVu Sans Condensed', 'DejaVu Sans', 'Liberation Sans', sans-serif;letter-spacing:0.358px;">1.001-5.000</span>
<span class="t" style="left:963.62px;top:701px;font-size:11px;line-height:15px;color:#222;font-weight:700;font-family:'DejaVu Sans Condensed', 'DejaVu Sans', 'Liberation Sans', sans-serif;letter-spacing:0.403px;">501-1.000</span>
<svg style="left:1067px;top:495px" width="348" height="240" viewBox="0 0 348 240"><defs><radialGradient id="sea1" cx="0.27" cy="0.3" r="0.3"><stop offset="0" stop-color="#bad6fc"/><stop offset="1" stop-color="#a4c6f8" stop-opacity="0"/></radialGradient><radialGradient id="sea2" cx="0.68" cy="0.1" r="0.16"><stop offset="0" stop-color="#b6d3fc"/><stop offset="1" stop-color="#a4c6f8" stop-opacity="0"/></radialGradient><linearGradient id="pin" x1="0" y1="0" x2="0" y2="1"><stop offset="0" stop-color="#fb7268"/><stop offset="1" stop-color="#ef4135"/></linearGradient><clipPath id="mc"><rect width="348" height="240"/></clipPath></defs><g clip-path="url(#mc)"><rect width="348" height="240" fill="#a4c6f8"/><rect width="348" height="240" fill="url(#sea1)"/><rect width="348" height="240" fill="url(#sea2)"/><polygon points="0,0 6,0 4,10 1,17 6,24 14,32 22,42 30,52 28,62 35,69 33,76 41,81 49,85 52,93 47,103 39,108 33,112 41,113 47,117 41,123 30,125 18,124 8,128 0,130" fill="#d7e7c6" /><polygon points="0,160.6 8.2,159.3 10.7,148 9.5,142.2 16.4,142.2 17.7,149.2 31,146 35.4,140.3 48.7,129 58.9,118.2 61.4,116.6 71.5,107.7 81.7,100 89.3,91.3 93,81 95.6,75 107,71 119.7,69.7 127.3,66 131,60.9 132.3,50.7 129.8,43 126,33 123.5,20.3 124.7,7.7 127.3,0 148.2,0 148,11 154.6,14.2 150.6,18.2 146,25.4 149,33 151,44 155,50 157,54.2 153.5,61.4 161,62.2 169,58.2 176,56.5 186,58.5 196.2,63.8 201,61.4 213,55.8 225,49.4 234,45.7 241.5,48.2 244,54.5 254.2,53.3 259.3,45.7 272,43.1 270.7,36.8 270.7,11.5 274.5,0 348,0 348,240 200,240 192,226 186,218 187,210 180,208 172,212 170,222 171,240 12,240 17,225 19.6,215 15.2,203.7 6.9,191 0.6,178.3 0,178" fill="#d7e7c6" /><polygon points="171.4,0 177,11 175.4,17.4 174.6,21 178.6,31.8 183.4,35 192.2,33.4 193.8,27 197.8,20.6 211.4,19 217,9.4 223.4,0" fill="#d6e7c5" /><polygon points="181,0 186,9 198,19 211.4,19 217,9.4 223.4,0" fill="#cbe0b7" /><polygon points="218.5,3 220.5,3 219.5,16.5 217.8,16.5" fill="#d7e7c6" /><polygon points="198.6,39 201,38.2 203.4,40.5 202,42.2 199.2,41.5" fill="#d7e7c6" /><polygon points="167.4,22 171,20.6 173.8,25 172.5,30.2 168.5,29" fill="#d7e7c6" /><polygon points="157.8,44 164,43 172.2,45 171,50.2 162,49.5" fill="#d7e7c6" /><polygon points="160,34 166,33 167,39 161,40" fill="#d7e7c6" /><ellipse cx="150" cy="95" rx="32" ry="16" fill="#c9dfb5" opacity="0.8" transform="rotate(10 150 95)"/><ellipse cx="120" cy="125" rx="16" ry="10" fill="#cbe0b7" opacity="0.7" transform="rotate(0 120 125)"/><ellipse cx="140" cy="150" rx="22" ry="12" fill="#cbe0b7" opacity="0.7" transform="rotate(20 140 150)"/><ellipse cx="300" cy="35" rx="38" ry="26" fill="#cbe0b7" opacity="0.75" transform="rotate(0 300 35)"/><ellipse cx="250" cy="75" rx="40" ry="22" fill="#e3eed8" opacity="0.8" transform="rotate(0 250 75)"/><ellipse cx="60" cy="165" rx="45" ry="22" fill="#e3eed8" opacity="0.8" transform="rotate(0 60 165)"/><ellipse cx="80" cy="215" rx="40" ry="18" fill="#cbe0b7" opacity="0.6" transform="rotate(0 80 215)"/><ellipse cx="265" cy="125" rx="30" ry="12" fill="#cbe0b7" opacity="0.7" transform="rotate(10 265 125)"/><ellipse cx="300" cy="190" rx="40" ry="30" fill="#e1edd5" opacity="0.8" transform="rotate(0 300 190)"/><ellipse cx="230" cy="185" rx="25" ry="12" fill="#e3eed8" opacity="0.8" transform="rotate(0 230 185)"/><ellipse cx="330" cy="120" rx="22" ry="40" fill="#e3eed8" opacity="0.7" transform="rotate(0 330 120)"/><ellipse cx="125" cy="200" rx="30" ry="10" fill="#e6e9e0" opacity="0.9" transform="rotate(-12 125 200)"/><ellipse cx="165" cy="195" rx="28" ry="8" fill="#dfe5d8" opacity="0.9" transform="rotate(5 165 195)"/><ellipse cx="105" cy="225" rx="14" ry="18" fill="#e4e8de" opacity="0.85" transform="rotate(-20 105 225)"/><polyline points="194.6,60.8 197,70 195,78 198.4,86 200,96 201,106.4 198.4,119" fill="none" stroke="#6c6c6c" stroke-width="1.1" stroke-linejoin="round"/><polyline points="198.4,119 192,121 185.7,125.4 180,128 175.6,134.3 179,142 182,150 185.7,157" fill="none" stroke="#6c6c6c" stroke-width="1.1" stroke-linejoin="round"/><polyline points="198.4,119 204,118 211,122.9 218,123 226.2,129.2 232,131 236.4,136.8 241,138 246.5,144.4" fill="none" stroke="#6c6c6c" stroke-width="1.1" stroke-linejoin="round"/><polyline points="185.7,157 190,154 196,158 203.4,159.6 212,156 223.7,159.6 230,152 236.4,147 246.5,144.4" fill="none" stroke="#6c6c6c" stroke-width="1.1" stroke-linejoin="round"/><polyline points="246.5,144.4 251.7,145.4 256,142 261.7,147 270,146 280,150 290,151.7" fill="none" stroke="#6c6c6c" stroke-width="1.1" stroke-linejoin="round"/><polyline points="302.3,60.8 304,70 306,81 307,90 304.8,98.8 300,106 297.2,116.5 301,124 299.7,131.7 296,140 290.8,152 293,160 292.2,169.5" fill="none" stroke="#6c6c6c" stroke-width="1.1" stroke-linejoin="round"/><polyline points="254.2,53.3 265,54 278,55 289.7,54.5 297.3,57 302.3,60.8" fill="none" stroke="#6c6c6c" stroke-width="1.1" stroke-linejoin="round"/><polyline points="269.4,36.8 276,37 283.3,40.6 289.7,45.7 289.7,54.5" fill="none" stroke="#6c6c6c" stroke-width="1.1" stroke-linejoin="round"/><polyline points="270.7,20.3 275,16 280.8,14 290,15 302.3,15.3 313.7,12 317.5,19 328,21 340.3,24 348,21.6" fill="none" stroke="#6c6c6c" stroke-width="1.1" stroke-linejoin="round"/><polyline points="340,24 334,26.7 333,31 331.5,34.3 327.7,41.9 325,48 322.6,54.5 318,60 312.5,62 306,64 302.3,60.8" fill="none" stroke="#6c6c6c" stroke-width="1.1" stroke-linejoin="round"/><polyline points="300,106 308.7,101.4 318,103 327.7,101.4 336,104 342.9,105.2 348,106.5" fill="none" stroke="#6c6c6c" stroke-width="1.1" stroke-linejoin="round"/><polyline points="107,71 105,80 103,90 102,102.7 103,108 100.7,112.8 99,118 96.9,121.7 98.1,134" fill="none" stroke="#6c6c6c" stroke-width="1.1" stroke-linejoin="round"/><polyline points="69,111.5 75,109 81.7,110 88,108 94.3,112.8 100.7,112.8" fill="none" stroke="#6c6c6c" stroke-width="1.1" stroke-linejoin="round"/><polyline points="60.1,117.5 63.9,122.6 70,126 72,132 77.9,136.5 82,134 86.7,137.8 90,143 94.3,144.1 98.1,145.4" fill="none" stroke="#6c6c6c" stroke-width="1.1" stroke-linejoin="round"/><polyline points="98.1,134 100.7,137.8 99,141 102,144 104.5,144.1 98.1,145.4" fill="none" stroke="#6c6c6c" stroke-width="1.1" stroke-linejoin="round"/><polyline points="104.5,144.1 109,149 114.6,150.5 124.1,154.3 121,160 119.7,163.1 118,170 117.1,177" fill="none" stroke="#6c6c6c" stroke-width="1.1" stroke-linejoin="round"/><polyline points="117.1,177 123,174 128.5,175.5 133.6,174.8 139.9,178.3 139.9,186 145,188 151.3,186 150,192 148.8,196 143,199 138.7,197.3 135,203 132.3,206.2 129,202 126,201 118,205 109.5,206.2 108,200 107,197.3 103,199 99.4,201 100.7,196 105,188 109.5,180.9 117.1,177" fill="none" stroke="#6c6c6c" stroke-width="1.1" stroke-linejoin="round"/><polyline points="109.5,206.2 111,212 112,216.3 108.3,220 110,224 112,226.5 110,232 113,240" fill="none" stroke="#6c6c6c" stroke-width="1.1" stroke-linejoin="round"/><polyline points="139.9,178.3 145,180.5 151.3,179.6 156,177 161.5,178.3 167.8,176 172,178 175.4,168.2 180,164 185.7,157" fill="none" stroke="#6c6c6c" stroke-width="1.1" stroke-linejoin="round"/><polyline points="151.3,186 158,187 164,189 170.3,189.7 177,193 184.5,196 195,197 204.8,196 210,192 216.2,191 218.7,186 217,181 220,177 222,173 225,170.7 223.8,158" fill="none" stroke="#6c6c6c" stroke-width="1.1" stroke-linejoin="round"/><polyline points="225,170.7 233,173 244,174.5 250,172 256,167 261.8,165.7 270,168 280,167 289.7,169.5 292.2,169.5" fill="none" stroke="#6c6c6c" stroke-width="1.1" stroke-linejoin="round"/><polyline points="216.2,191 217.5,193.5 224,200 232.7,206.2 239,207 245.3,206.2 253,204 261.8,201 268,198 274.5,196 278,188 282,180.9 287,174 292.2,169.5" fill="none" stroke="#6c6c6c" stroke-width="1.1" stroke-linejoin="round"/><polyline points="292.2,169.5 300,171 308.7,170.7 320,168 330,165 340.3,163 348,163" fill="none" stroke="#6c6c6c" stroke-width="1.1" stroke-linejoin="round"/><polyline points="184.5,196 186,203 188.3,208.7 196,207 204.8,208.7 207,203 204.8,196" fill="none" stroke="#6c6c6c" stroke-width="1.1" stroke-linejoin="round"/><polyline points="245.3,206.2 248,212 249,216.3 247,222 250.4,226.5 249,233 252,240" fill="none" stroke="#6c6c6c" stroke-width="1.1" stroke-linejoin="round"/><polyline points="261.8,201 267,208 274.5,216.3 274,221 275.7,225.2 280,232 279,240" fill="none" stroke="#6c6c6c" stroke-width="1.1" stroke-linejoin="round"/><polyline points="188.3,208.7 194,214 204,217 215,215 226,219 236,217 249,216.3" fill="none" stroke="#6c6c6c" stroke-width="1.1" stroke-linejoin="round"/><circle cx="270.6" cy="95.3" r="2.700" fill="#fff" stroke="#222" stroke-width="1.200"/><circle cx="270.6" cy="95.3" r="1.300" fill="#222"/><circle cx="183.4" cy="90" r="2.700" fill="#fff" stroke="#222" stroke-width="1.200"/><circle cx="183.4" cy="90" r="1.300" fill="#222"/><circle cx="29.4" cy="109.5" r="2.700" fill="#fff" stroke="#222" stroke-width="1.200"/><circle cx="29.4" cy="109.5" r="1.300" fill="#222"/><circle cx="57.3" cy="156.6" r="2.700" fill="#fff" stroke="#222" stroke-width="1.200"/><circle cx="57.3" cy="156.6" r="1.300" fill="#222"/><g font-family='"Liberation Sans", sans-serif'><text x="301" y="6.3" font-size="13" font-weight="700" textLength="50.0" lengthAdjust="spacingAndGlyphs" fill="#2b2b2b" stroke="#fff" stroke-opacity=".85" stroke-width="2" paint-order="stroke" stroke-linejoin="round">Lettland</text><text x="279.5" y="35.5" font-size="13" font-weight="700" textLength="46.8" lengthAdjust="spacingAndGlyphs" fill="#2b2b2b" stroke="#fff" stroke-opacity=".85" stroke-width="2" paint-order="stroke" stroke-linejoin="round">Litauen</text><text x="308" y="82.8" font-size="13" font-weight="700" textLength="84.0" lengthAdjust="spacingAndGlyphs" fill="#2b2b2b" stroke="#fff" stroke-opacity=".85" stroke-width="2" paint-order="stroke" stroke-linejoin="round">Weißrussland</text><text x="226.8" y="87.4" font-size="13.5" font-weight="700" textLength="34.9" lengthAdjust="spacingAndGlyphs" fill="#2b2b2b" stroke="#fff" stroke-opacity=".85" stroke-width="2" paint-order="stroke" stroke-linejoin="round">Polen</text><text x="246.5" y="109.5" font-size="11.5" textLength="48.2" lengthAdjust="spacingAndGlyphs" fill="#2b2b2b" stroke="#fff" stroke-opacity=".85" stroke-width="2" paint-order="stroke" stroke-linejoin="round">Warschau</text><text x="121.1" y="35.5" font-size="11" font-weight="700" textLength="50.2" lengthAdjust="spacingAndGlyphs" fill="#2b2b2b" stroke="#fff" stroke-opacity=".85" stroke-width="2" paint-order="stroke" stroke-linejoin="round">Dänemark</text><text x="151.5" y="103.4" font-size="11.5" textLength="27.9" lengthAdjust="spacingAndGlyphs" fill="#2b2b2b" stroke="#fff" stroke-opacity=".85" stroke-width="2" paint-order="stroke" stroke-linejoin="round">Berlin</text><text x="71.2" y="92.2" font-size="11" font-weight="700" textLength="59.3" lengthAdjust="spacingAndGlyphs" fill="#2b2b2b" stroke="#fff" stroke-opacity=".85" stroke-width="2" paint-order="stroke" stroke-linejoin="round">Niederlande</text><text x="11.4" y="102.6" font-size="11.5" textLength="37.0" lengthAdjust="spacingAndGlyphs" fill="#2b2b2b" stroke="#fff" stroke-opacity=".85" stroke-width="2" paint-order="stroke" stroke-linejoin="round">London</text><text x="110.5" y="119.6" font-size="14" font-weight="700" textLength="77.2" lengthAdjust="spacingAndGlyphs" fill="#2b2b2b" stroke="#fff" stroke-opacity=".85" stroke-width="2" paint-order="stroke" stroke-linejoin="round">Deutschland</text><text x="66.6" y="130.5" font-size="11" font-weight="700" textLength="36.0" lengthAdjust="spacingAndGlyphs" fill="#2b2b2b" stroke="#fff" stroke-opacity=".85" stroke-width="2" paint-order="stroke" stroke-linejoin="round">Belgien</text><text x="45.6" y="149" font-size="11.5" textLength="24.4" lengthAdjust="spacingAndGlyphs" fill="#2b2b2b" stroke="#fff" stroke-opacity=".85" stroke-width="2" paint-order="stroke" stroke-linejoin="round">Paris</text><text x="173" y="143.9" font-size="11" font-weight="700" textLength="65.4" lengthAdjust="spacingAndGlyphs" fill="#2b2b2b" stroke="#fff" stroke-opacity=".85" stroke-width="2" paint-order="stroke" stroke-linejoin="round">Tschechische</text><text x="183.2" y="154" font-size="11" font-weight="700" textLength="43.0" lengthAdjust="spacingAndGlyphs" fill="#2b2b2b" stroke="#fff" stroke-opacity=".85" stroke-width="2" paint-order="stroke" stroke-linejoin="round">Republik</text><text x="242.2" y="162.2" font-size="11" font-weight="700" textLength="44.1" lengthAdjust="spacingAndGlyphs" fill="#2b2b2b" stroke="#fff" stroke-opacity=".85" stroke-width="2" paint-order="stroke" stroke-linejoin="round">Slowakei</text><text x="167.2" y="181.7" font-size="11" font-weight="700" textLength="50.2" lengthAdjust="spacingAndGlyphs" fill="#2b2b2b" stroke="#fff" stroke-opacity=".85" stroke-width="2" paint-order="stroke" stroke-linejoin="round">Österreich</text><text x="238.4" y="191.3" font-size="11" font-weight="700" textLength="35.2" lengthAdjust="spacingAndGlyphs" fill="#2b2b2b" stroke="#fff" stroke-opacity=".85" stroke-width="2" paint-order="stroke" stroke-linejoin="round">Ungarn</text><text x="26.6" y="198.4" font-size="14" font-weight="700" textLength="65.9" lengthAdjust="spacingAndGlyphs" fill="#2b2b2b" stroke="#fff" stroke-opacity=".85" stroke-width="2" paint-order="stroke" stroke-linejoin="round">Frankreich</text><text x="283.8" y="212.3" font-size="14" font-weight="700" textLength="62.2" lengthAdjust="spacingAndGlyphs" fill="#2b2b2b" stroke="#fff" stroke-opacity=".85" stroke-width="2" paint-order="stroke" stroke-linejoin="round">Rumänien</text><text x="179.4" y="222.2" font-size="11" font-weight="700" textLength="41.0" lengthAdjust="spacingAndGlyphs" fill="#2b2b2b" stroke="#fff" stroke-opacity=".85" stroke-width="2" paint-order="stroke" stroke-linejoin="round">Kroatien</text><text x="-37" y="35.5" font-size="14" font-weight="700" textLength="75.0" lengthAdjust="spacingAndGlyphs" fill="#2b2b2b" stroke="#fff" stroke-opacity=".85" stroke-width="2" paint-order="stroke" stroke-linejoin="round">Vereinigtes</text><text x="-35" y="52.7" font-size="14" font-weight="700" textLength="68.7" lengthAdjust="spacingAndGlyphs" fill="#2b2b2b" stroke="#fff" stroke-opacity=".85" stroke-width="2" paint-order="stroke" stroke-linejoin="round">Königreich</text><text x="329.5" y="181" font-size="11" font-weight="700" textLength="38.5" lengthAdjust="spacingAndGlyphs" fill="#2b2b2b" stroke="#fff" stroke-opacity=".85" stroke-width="2" paint-order="stroke" stroke-linejoin="round">Moldau</text><text x="274" y="237" font-size="11" font-weight="700" textLength="40.0" lengthAdjust="spacingAndGlyphs" fill="#555" stroke="#fff" stroke-opacity=".85" stroke-width="2" paint-order="stroke" stroke-linejoin="round">Serbien</text></g><g transform="translate(100,78.3)"><path d="M11 .7C5.2 .7 .7 5.2 .7 10.9c0 4.1 2.3 7.1 4.7 10.9 2.7 4.3 4.6 8.3 5.2 16.9 .05 .5 .2 .6 .4 .6s.35-.1 .4-.6c.6-8.600 2.500-12.600 5.200-16.900 2.400-3.800 4.700-6.800 4.700-10.900C21.300 5.200 16.800 .7 11 .7z" fill="url(#pin)" stroke="#b5352a" stroke-width=".8"/><circle cx="11" cy="10.800" r="3.500" fill="#5e1612"/></g><g transform="translate(97,70.3)"><path d="M11 .7C5.2 .7 .7 5.2 .7 10.9c0 4.1 2.3 7.1 4.7 10.9 2.7 4.3 4.6 8.3 5.2 16.9 .05 .5 .2 .6 .4 .6s.35-.1 .4-.6c.6-8.600 2.500-12.600 5.200-16.900 2.400-3.800 4.700-6.800 4.700-10.900C21.300 5.200 16.800 .7 11 .7z" fill="url(#pin)" stroke="#b5352a" stroke-width=".8"/><circle cx="11" cy="10.800" r="3.500" fill="#5e1612"/></g><g transform="translate(134.2,31.6)"><path d="M11 .7C5.2 .7 .7 5.2 .7 10.9c0 4.1 2.3 7.1 4.7 10.9 2.7 4.3 4.6 8.3 5.2 16.9 .05 .5 .2 .6 .4 .6s.35-.1 .4-.6c.6-8.600 2.500-12.600 5.200-16.900 2.400-3.800 4.700-6.800 4.700-10.900C21.300 5.200 16.800 .7 11 .7z" fill="url(#pin)" stroke="#b5352a" stroke-width=".8"/><circle cx="11" cy="10.800" r="3.500" fill="#5e1612"/></g><g transform="translate(173.2,50.5)"><path d="M11 .7C5.2 .7 .7 5.2 .7 10.9c0 4.1 2.3 7.1 4.7 10.9 2.7 4.3 4.6 8.3 5.2 16.9 .05 .5 .2 .6 .4 .6s.35-.1 .4-.6c.6-8.600 2.500-12.600 5.200-16.900 2.400-3.800 4.700-6.800 4.700-10.900C21.300 5.200 16.800 .7 11 .7z" fill="url(#pin)" stroke="#b5352a" stroke-width=".8"/><circle cx="11" cy="10.800" r="3.500" fill="#5e1612"/></g><g transform="translate(151.9,129)"><path d="M11 .7C5.2 .7 .7 5.2 .7 10.9c0 4.1 2.3 7.1 4.7 10.9 2.7 4.3 4.6 8.3 5.2 16.9 .05 .5 .2 .6 .4 .6s.35-.1 .4-.6c.6-8.600 2.500-12.600 5.200-16.900 2.400-3.800 4.700-6.800 4.700-10.900C21.300 5.200 16.800 .7 11 .7z" fill="url(#pin)" stroke="#b5352a" stroke-width=".8"/><circle cx="11" cy="10.800" r="3.500" fill="#5e1612"/></g><rect x="48" y="225.5" width="300" height="14.500" fill="#fff" opacity=".7"/><rect x="236" y="227" width=".8" height="12" fill="#ccc"/><text x="54.7" y="235.600" font-family='"Liberation Sans", sans-serif' font-size="9.800" fill="#444" textLength="174.600" lengthAdjust="spacingAndGlyphs">Kartendaten © 2016 Google, ORION-ME</text><text x="242.7" y="235.600" font-family='"Liberation Sans", sans-serif' font-size="9.800" fill="#444" textLength="99.600" lengthAdjust="spacingAndGlyphs">Nutzungsbedingungen</text><text x="5.8" y="231.6" font-family='"Liberation Sans", sans-serif' font-size="20.5" textLength="62" lengthAdjust="spacingAndGlyphs" stroke="#fff" stroke-width="1.600" stroke-opacity=".8" paint-order="stroke"><tspan fill="#4285f4">G</tspan><tspan fill="#ea4335">o</tspan><tspan fill="#fbbc05">o</tspan><tspan fill="#4285f4">g</tspan><tspan fill="#34a853">l</tspan><tspan fill="#ea4335">e</tspan></text><g filter="drop-shadow(0 1px 2px rgba(0,0,0,.3))"><rect x="10.1" y="9.600" width="92" height="30.900" rx="2" fill="#fff"/><rect x="309.9" y="122.900" width="27.800" height="27.800" rx="2" fill="#fff"/><rect x="309.9" y="160.900" width="27.800" height="54.500" rx="2" fill="#fff"/></g><rect x="51.2" y="9.600" width=".8" height="30.900" fill="#e6e6e6"/><text x="18" y="28.600" font-family='"Liberation Sans", sans-serif' font-size="11.200" fill="#000" stroke="#000" stroke-width=".25" textLength="26.300" lengthAdjust="spacingAndGlyphs">Karte</text><text x="60.3" y="28.600" font-family='"Liberation Sans", sans-serif' font-size="11.200" fill="#666" textLength="33.400" lengthAdjust="spacingAndGlyphs">Satellit</text><rect x="315" y="188" width="18" height=".8" fill="#e6e6e6"/><path d="M318.8 173.300h11M324.300 167.800v11M318.800 202.200h11" stroke="#666" stroke-width="2.200"/><g transform="translate(324.300,126.500)"><circle cx="0" cy="3.200" r="3" fill="#f7b21a" stroke="#e09a10" stroke-width=".5"/><path d="M-3.600 7.200h7.200l1.200 6.400h-1.800l-.4 6.200h-1.900l-.3-4.500h-.8l-.3 4.500h-1.900l-.4-6.200h-1.800z" fill="#f7b21a" stroke="#e09a10" stroke-width=".5"/></g></g></svg>
<div style="left:311px;top:765px;width:1107px;height:63px;background:#f2f2f2;border:1px solid #cfcfcf;border-radius:5px;box-sizing:border-box;"></div>
<div style="left:329px;top:790px;width:12px;height:12px;background:linear-gradient(#fdfdfd,#e9e9e9);border:1px solid #a9a9a9;border-radius:3px;box-sizing:border-box;"></div>
<span class="t" style="left:352.28px;top:788px;font-size:15px;line-height:19px;color:#333;font-weight:700;letter-spacing:-0.415px;">Alle markieren</span>
<div style="left:466px;top:780px;width:36.8px;height:38px;background:#d9d9d9;border-radius:3px;"></div>
<svg style="left:477.48px;top:792px;" width="13.44" height="12.4" viewBox="0 0 1664 1536" preserveAspectRatio="none"><path fill="#4a4a4a" d="M1280 1344C1280 1379 1251 1408 1216 1408C1181 1408 1152 1379 1152 1344C1152 1309 1181 1280 1216 1280C1251 1280 1280 1309 1280 1344ZM1536 1344C1536 1379 1507 1408 1472 1408C1437 1408 1408 1379 1408 1344C1408 1309 1437 1280 1472 1280C1507 1280 1536 1309 1536 1344ZM1664 1120C1664 1067 1621 1024 1568 1024H1104L968 1160C931 1196 883 1216 832 1216C781 1216 733 1196 696 1160L561 1024H96C43 1024 0 1067 0 1120V1440C0 1493 43 1536 96 1536H1568C1621 1536 1664 1493 1664 1440ZM1339 551C1329 528 1306 512 1280 512H1024V64C1024 29 995 0 960 0H704C669 0 640 29 640 64V512H384C358 512 335 528 325 551C315 575 320 603 339 621L787 1069C799 1082 816 1088 832 1088C848 1088 865 1082 877 1069L1325 621C1344 603 1349 575 1339 551Z"/></svg>
<div style="left:514px;top:780px;width:40px;height:38px;background:#e0e0e0;border-radius:3px;"></div>
<div style="left:564.8px;top:780px;width:36.0px;height:38px;background:#e0e0e0;border-radius:3px;"></div>
<div style="left:612px;top:780px;width:36px;height:38px;background:#e0e0e0;border-radius:3px;"></div>
<svg style="left:525.6px;top:793.62px;" width="17.2" height="10.76" viewBox="0 256 2048 1280" preserveAspectRatio="none"><path fill="#7a7a7a" d="M1152 896C1152 1178 922 1408 640 1408C358 1408 128 1178 128 896C128 614 358 384 640 384C922 384 1152 614 1152 896ZM1920 896C1920 1178 1690 1408 1408 1408H1022C1178 1291 1280 1105 1280 896C1280 687 1178 501 1022 384H1408C1690 384 1920 614 1920 896ZM2048 896C2048 543 1761 256 1408 256H640C287 256 0 543 0 896C0 1249 287 1536 640 1536H1408C1761 1536 2048 1249 2048 896Z"/></svg>
<svg style="left:577px;top:793.2px;" width="12" height="12" viewBox="0 128 1536 1536" preserveAspectRatio="none"><path fill="#707070" d="M1216 960C1216 995 1187 1024 1152 1024H896V1280C896 1315 867 1344 832 1344H704C669 1344 640 1315 640 1280V1024H384C349 1024 320 995 320 960V832C320 797 349 768 384 768H640V512C640 477 669 448 704 448H832C867 448 896 477 896 512V768H1152C1187 768 1216 797 1216 832V960ZM1536 896C1536 472 1192 128 768 128C344 128 0 472 0 896C0 1320 344 1664 768 1664C1192 1664 1536 1320 1536 896Z"/></svg>
<svg style="left:624px;top:793.2px;" width="12" height="12" viewBox="0 128 1536 1536" preserveAspectRatio="none"><path fill="#707070" d="M1216 960C1216 995 1187 1024 1152 1024H384C349 1024 320 995 320 960V832C320 797 349 768 384 768H1152C1187 768 1216 797 1216 832V960ZM1536 896C1536 472 1192 128 768 128C344 128 0 472 0 896C0 1320 344 1664 768 1664C1192 1664 1536 1320 1536 896Z"/></svg>
<div style="left:789px;top:780px;width:79px;height:36px;background:#fff;border:1px solid #ccc;border-radius:4px;box-sizing:border-box;"></div>
<span class="t" style="left:802.73px;top:789px;font-size:13.5px;line-height:17px;color:#999;letter-spacing:-0.529px;">&lt; Zurück</span>
<div style="left:870px;top:780px;width:37px;height:36px;background:#ccc;border-radius:3px;"></div>
<span class="t" style="left:884.13px;top:789px;font-size:13.5px;line-height:17px;color:#666;">1</span>
<div style="left:908px;top:780px;width:76px;height:36px;background:#fff;border:1px solid #ccc;border-radius:4px;box-sizing:border-box;"></div>
<span class="t" style="left:922.33px;top:789px;font-size:13.5px;line-height:17px;color:#999;letter-spacing:-0.515px;">Weiter &gt;</span>
<span class="t" style="left:1141.47px;top:787px;font-size:15px;line-height:19px;color:#333;font-weight:700;letter-spacing:-0.463px;">Ergebnisse 0 - 21</span>
<span class="t" style="left:1271.88px;top:787px;font-size:15px;line-height:19px;color:#333;">-</span>
<span class="t" style="left:1285.47px;top:787px;font-size:15px;line-height:19px;color:#333;letter-spacing:-0.141px;">Anzahl:</span>
<div style="left:1339.2px;top:780px;width:57.6px;height:33.6px;background:#fff;border:1px solid #a6a6a6;box-sizing:border-box;"></div>
<span class="t" style="left:1348.27px;top:787px;font-size:15px;line-height:19px;color:#333;letter-spacing:0.112px;">30</span>
<svg style="left:1384px;top:793.6px" width="5.800" height="6.400" viewBox="0 0 7 7"><path d="M0 0h7L3.500 7z" fill="#222"/></svg>
<article style="left:311px;top:851px;width:567px;height:327px;background:#fff;border:1px solid #d9d9d9;border-radius:4px;box-sizing:border-box;"></article>
<div style="left:312px;top:852px;width:565px;height:39px;background:#f5f5f5;border-bottom:1px solid #ddd;border-radius:3px 3px 0 0;"></div>
<div style="left:327px;top:866px;width:12px;height:12px;background:linear-gradient(#fdfdfd,#e9e9e9);border:1px solid #a9a9a9;border-radius:3px;box-sizing:border-box;"></div>
<h3 class="t" style="left:349.04px;top:861px;font-size:16px;line-height:21px;color:#333;font-weight:700;letter-spacing:-0.534px;">dpa Deutsche Presse-Agentur GmbH</h3>
<svg style="left:786px;top:865.85px;" width="18.4" height="11.5" viewBox="0 256 2048 1280" preserveAspectRatio="none"><path fill="#428bca" d="M1152 896C1152 1178 922 1408 640 1408C358 1408 128 1178 128 896C128 614 358 384 640 384C922 384 1152 614 1152 896ZM1920 896C1920 1178 1690 1408 1408 1408H1022C1178 1291 1280 1105 1280 896C1280 687 1178 501 1022 384H1408C1690 384 1920 614 1920 896ZM2048 896C2048 543 1761 256 1408 256H640C287 256 0 543 0 896C0 1249 287 1536 640 1536H1408C1761 1536 2048 1249 2048 896Z"/></svg>
<svg style="left:821.2px;top:865px;" width="12.8" height="12.8" viewBox="0 128 1536 1536" preserveAspectRatio="none"><path fill="#428bca" d="M1216 960C1216 995 1187 1024 1152 1024H896V1280C896 1315 867 1344 832 1344H704C669 1344 640 1315 640 1280V1024H384C349 1024 320 995 320 960V832C320 797 349 768 384 768H640V512C640 477 669 448 704 448H832C867 448 896 477 896 512V768H1152C1187 768 1216 797 1216 832V960ZM1536 896C1536 472 1192 128 768 128C344 128 0 472 0 896C0 1320 344 1664 768 1664C1192 1664 1536 1320 1536 896Z"/></svg>
<svg style="left:849.6px;top:865px;" width="12.8" height="12.8" viewBox="0 128 1536 1536" preserveAspectRatio="none"><path fill="#428bca" d="M1216 960C1216 995 1187 1024 1152 1024H384C349 1024 320 995 320 960V832C320 797 349 768 384 768H1152C1187 768 1216 797 1216 832V960ZM1536 896C1536 472 1192 128 768 128C344 128 0 472 0 896C0 1320 344 1664 768 1664C1192 1664 1536 1320 1536 896Z"/></svg>
<p class="t" style="left:334.31px;top:908px;font-size:14px;line-height:18px;color:#777;letter-spacing:-0.271px;">dpa ist die Nachrichtenagentur der deutschen Medien. Schnelle, crossmediale,</p>
<p class="t" style="left:334.31px;top:929px;font-size:14px;line-height:18px;color:#777;letter-spacing:-0.281px;">zuverlässige, unabhängige und unparteiische Nachrichten.</p>
<span class="t" style="left:334.28px;top:961px;font-size:15px;line-height:19px;color:#333;letter-spacing:0.126px;">Mittelweg 38</span>
<span class="t" style="left:334.28px;top:982px;font-size:15px;line-height:19px;color:#333;letter-spacing:-0.032px;">20148 Hamburg</span>
<span class="t" style="left:334.28px;top:1003px;font-size:15px;line-height:19px;color:#333;letter-spacing:-0.059px;">Deutschland</span>
<svg style="left:334.2px;top:1031.6px;" width="12.6" height="12.6" viewBox="0 128 1536 1536" preserveAspectRatio="none"><path fill="#428bca" d="M768 128C344 128 0 472 0 896C0 1320 344 1664 768 1664C1192 1664 1536 1320 1536 896C1536 472 1192 128 768 128ZM1042 649C1053 642 1071 633 1085 637C1096 640 1105 644 1092 653C1086 657 1077 653 1070 655C1079 657 1092 661 1088 670C1114 685 1080 703 1063 701C1071 702 1046 717 1046 716C1037 721 1025 721 1018 730C1010 741 1021 760 1006 756C1000 769 977 762 967 776C978 788 956 805 945 790C935 794 940 805 930 811C934 817 935 823 928 827C930 826 942 836 945 837C943 842 939 846 934 846C939 859 928 873 919 881C909 889 886 897 883 899C865 916 853 941 885 948C886 948 886 981 887 982C889 994 894 1029 873 1016C863 1011 857 983 854 972C851 960 850 960 842 948C829 963 827 952 816 945C805 939 789 941 783 935C768 946 757 943 754 926C750 934 758 946 757 949C752 959 743 957 735 951C722 941 694 958 679 951C680 951 684 955 687 957C684 969 677 962 671 966C664 971 658 981 652 986C665 1011 651 1035 652 1062C652 1082 665 1117 684 1128C693 1133 723 1135 732 1131C746 1125 744 1114 749 1102C754 1089 760 1083 775 1082C818 1080 785 1115 780 1133C777 1146 776 1161 774 1173C779 1175 784 1174 789 1174C789 1170 792 1165 792 1162C798 1172 818 1175 824 1163C831 1175 845 1184 847 1198C849 1212 862 1227 843 1227C829 1227 845 1255 847 1260C858 1280 876 1288 896 1278C896 1286 893 1308 882 1310C872 1312 853 1291 857 1280C856 1284 853 1287 850 1289C840 1277 823 1271 814 1259C812 1256 785 1215 791 1213C777 1219 749 1209 736 1202C715 1191 712 1162 686 1166C668 1169 663 1176 642 1168C628 1163 616 1153 602 1146C586 1137 558 1128 552 1108C546 1092 548 1073 539 1058C533 1048 515 1028 502 1028C514 1028 491 998 488 995C477 982 437 947 445 927C447 924 425 916 421 915C425 925 426 936 431 945C436 955 442 964 448 974C459 992 474 1014 472 1036C459 1040 463 1021 459 1013C452 1000 433 1000 428 986C430 985 431 985 433 984C434 967 409 953 413 941C399 930 399 909 389 895C380 882 365 876 352 867C347 864 311 818 324 815C304 820 294 773 297 761C297 761 295 761 295 760C299 748 292 686 308 685C297 686 294 659 297 654C299 650 314 665 315 667C321 664 327 656 325 649C322 641 311 634 304 628C301 626 261 600 260 601C264 594 263 587 257 582C238 597 248 568 238 565C234 564 230 561 226 557C284 465 365 388 461 335C467 334 475 334 483 334C501 336 511 351 524 360C526 355 522 347 519 342C522 334 534 332 541 330C550 329 563 327 571 331C565 322 558 314 551 306C550 307 547 309 546 311C535 302 514 314 504 318C496 322 489 327 481 330C476 332 473 332 469 331C499 315 530 301 563 290C569 294 575 301 584 308C578 303 578 326 580 330C591 345 615 335 630 335C629 335 674 341 665 330C672 340 672 355 681 364C690 355 677 345 683 336C685 332 703 327 709 324C716 319 704 312 701 310C691 304 652 301 671 278C678 270 703 274 711 279C722 285 734 296 719 306C726 307 759 316 754 329C757 323 762 314 770 314C779 315 781 336 785 341C799 366 823 316 827 318C809 311 843 302 852 305C859 308 870 332 857 331C868 341 869 363 849 362C835 361 819 342 806 357C797 367 793 382 784 391C770 405 751 404 734 402C741 403 719 426 717 430C711 437 707 445 705 453C703 463 705 474 700 484C717 479 726 510 719 511C740 508 757 508 777 515C791 520 812 526 818 541C822 535 841 538 847 540C859 546 860 559 863 570C867 585 880 610 897 602C900 600 922 590 914 584C906 577 897 559 905 549C913 538 932 535 937 521C945 498 913 501 913 484C913 474 926 471 925 459C925 449 910 429 922 422C932 416 980 426 989 432C998 438 1026 446 1028 455C1026 455 1025 455 1023 455C1031 462 1038 477 1024 481C1033 479 1059 489 1041 495C1047 492 1052 494 1058 490C1065 486 1069 479 1078 484C1080 485 1091 463 1097 464C1106 465 1108 478 1112 484C1116 493 1127 496 1131 505C1138 522 1135 538 1158 544C1165 546 1184 535 1183 550C1187 546 1189 543 1189 542C1190 556 1196 572 1213 570C1213 570 1213 589 1211 592C1205 601 1190 599 1181 604C1178 605 1154 626 1157 629C1144 614 1123 614 1106 618C1088 621 1071 623 1054 630C1046 634 1038 638 1032 645C1029 649 1024 667 1019 668C1029 666 1034 655 1042 649ZM879 1526C878 1521 877 1511 877 1510C876 1494 893 1483 892 1468C881 1465 878 1454 880 1442C882 1425 897 1413 909 1402C921 1391 924 1368 921 1354C916 1330 916 1305 912 1281C913 1287 930 1285 933 1293C937 1286 939 1277 944 1270C948 1264 955 1262 961 1257C971 1251 992 1228 1004 1242C1014 1254 989 1267 1002 1278C1006 1270 1002 1258 1010 1250C1026 1232 1037 1252 1053 1257C1070 1262 1076 1268 1089 1279C1085 1275 1105 1268 1107 1267C1126 1263 1134 1274 1147 1284C1161 1294 1183 1301 1181 1321C1191 1323 1197 1326 1205 1329C1213 1333 1224 1331 1230 1337C1138 1434 1016 1502 879 1526Z"/></svg>
<span class="t" style="left:353.11px;top:1029px;font-size:14px;line-height:18px;color:#333;letter-spacing:-0.362px;">Webseite bekannt</span>
<svg style="left:334.47px;top:1055px;" width="15.26" height="14" viewBox="0 16 1920 1761" preserveAspectRatio="none"><path fill="#428bca" d="M896 896C896 1037 781 1152 640 1152C499 1152 384 1037 384 896C384 755 499 640 640 640C781 640 896 755 896 896ZM1664 1408C1664 1478 1607 1536 1536 1536C1466 1536 1408 1479 1408 1408C1408 1338 1466 1280 1536 1280C1606 1280 1664 1338 1664 1408ZM1664 384C1664 454 1607 512 1536 512C1466 512 1408 455 1408 384C1408 314 1466 256 1536 256C1606 256 1664 314 1664 384ZM1280 805C1280 791 1270 778 1256 775L1104 752C1095 724 1083 697 1070 670C1098 631 1128 595 1157 556C1161 550 1164 544 1164 537C1164 509 1046 401 1020 377C1014 372 1007 369 999 369C992 369 985 371 979 376L861 465C837 453 812 442 786 434L763 281C761 267 747 256 733 256H547C533 256 521 266 517 280C504 329 499 384 494 434C467 443 442 453 417 466L302 376C296 372 289 369 281 369C252 369 140 490 120 517C115 523 113 530 113 537C113 544 116 551 120 557C152 595 182 632 210 672C197 697 186 722 178 748L23 772C10 774 0 789 0 802V987C0 1001 10 1014 24 1016L176 1040C185 1068 197 1095 211 1122C182 1161 152 1198 123 1236C119 1242 116 1248 116 1255C116 1284 234 1391 260 1415C266 1420 273 1423 281 1423C288 1423 296 1421 301 1416L419 1327C443 1339 468 1350 494 1358L517 1511C519 1525 533 1536 547 1536H733C747 1536 759 1526 763 1512C776 1463 781 1408 786 1357C813 1349 838 1339 863 1326L978 1416C984 1420 991 1423 999 1423C1028 1423 1140 1301 1160 1274C1165 1269 1167 1262 1167 1255C1167 1247 1164 1241 1160 1235C1128 1197 1098 1160 1070 1120C1083 1095 1094 1070 1102 1044L1257 1020C1270 1018 1280 1003 1280 990ZM1920 1338C1920 1323 1791 1309 1771 1307C1763 1289 1753 1271 1741 1255C1750 1235 1792 1135 1792 1117C1792 1115 1791 1112 1788 1110C1776 1103 1669 1040 1664 1040L1658 1042C1624 1076 1594 1115 1566 1154C1556 1153 1546 1152 1536 1152C1526 1152 1516 1153 1506 1154C1496 1139 1421 1040 1408 1040C1403 1040 1296 1104 1284 1110C1281 1112 1280 1115 1280 1117C1280 1134 1322 1235 1331 1255C1319 1271 1309 1289 1301 1307C1281 1309 1152 1323 1152 1338V1478C1152 1493 1281 1507 1301 1509C1309 1528 1319 1545 1331 1561C1322 1581 1280 1682 1280 1699C1280 1701 1281 1704 1284 1706C1296 1713 1403 1777 1408 1777C1421 1777 1496 1677 1506 1662C1516 1663 1526 1664 1536 1664C1546 1664 1556 1663 1566 1662C1576 1677 1651 1777 1664 1777C1669 1777 1776 1713 1788 1706C1791 1704 1792 1702 1792 1699C1792 1681 1750 1581 1741 1561C1753 1545 1763 1528 1771 1509C1791 1507 1920 1493 1920 1478ZM1920 314C1920 299 1791 285 1771 283C1763 265 1753 247 1741 231C1750 211 1792 111 1792 93C1792 91 1791 88 1788 86C1776 79 1669 16 1664 16L1658 18C1624 52 1594 91 1566 130C1556 129 1546 128 1536 128C1526 128 1516 129 1506 130C1496 115 1421 16 1408 16C1403 16 1296 80 1284 86C1281 88 1280 91 1280 93C1280 110 1322 211 1331 231C1319 247 1309 265 1301 283C1281 285 1152 299 1152 314V454C1152 469 1281 483 1301 485C1309 504 1319 521 1331 537C1322 557 1280 658 1280 675C1280 677 1281 680 1284 682C1296 689 1403 753 1408 753C1421 753 1496 653 1506 638C1516 639 1526 640 1536 640C1546 640 1556 639 1566 638C1576 653 1651 753 1664 753C1669 753 1776 689 1788 682C1791 680 1792 678 1792 675C1792 657 1750 557 1741 537C1753 521 1763 504 1771 485C1791 483 1920 469 1920 454Z"/></svg>
<span class="t" style="left:356.31px;top:1053px;font-size:14px;line-height:18px;color:#333;letter-spacing:-0.235px;">6 Technologien erkannt</span>
<span class="t" style="left:613.11px;top:961px;font-size:14px;line-height:18px;color:#333;font-weight:700;letter-spacing:-0.601px;">Telefon:</span>
<span class="t" style="left:672.71px;top:961px;font-size:14px;line-height:18px;color:#333;letter-spacing:-0.382px;">+49 40xxxxx</span>
<span class="t" style="left:613.11px;top:985px;font-size:14px;line-height:18px;color:#333;font-weight:700;letter-spacing:-0.932px;">Fax:</span>
<span class="t" style="left:644.71px;top:985px;font-size:14px;line-height:18px;color:#333;letter-spacing:-0.358px;">+49 40xxxxxxxxx</span>
<svg style="left:613.92px;top:1010.6px;" width="6.96" height="13.4" viewBox="95 0 864 1664" preserveAspectRatio="none"><path fill="#428bca" d="M959 12C932 8 839 0 731 0C505 0 350 138 350 391V609H95V905H350V1664H656V905H910L949 609H656V420C656 335 679 276 802 276H959Z"/></svg>
<span class="t" style="left:628.31px;top:1009px;font-size:14px;line-height:18px;color:#333;letter-spacing:-0.290px;">5 Social-Accounts bekannt</span>
<span class="t" style="left:613.11px;top:1028px;font-size:14px;line-height:18px;color:#333;font-weight:700;letter-spacing:-0.582px;">E-Mail:</span>
<svg style="left:662.62px;top:1031.8px;" width="14.76" height="11.6" viewBox="0 256 1792 1408" preserveAspectRatio="none"><path fill="#428bca" d="M1664 1504C1664 1521 1649 1536 1632 1536H160C143 1536 128 1521 128 1504V736C149 760 172 782 197 802C340 912 484 1024 623 1140C698 1203 791 1280 895 1280H896H897C1001 1280 1094 1203 1169 1140C1308 1024 1452 912 1595 802C1620 782 1643 760 1664 736V1504ZM1664 453C1664 538 1582 649 1517 700C1383 805 1249 911 1116 1017C1063 1060 967 1152 897 1152H896H895C825 1152 729 1060 676 1017C543 911 409 805 275 700C185 629 128 530 128 416C128 399 143 384 160 384H1632C1670 384 1664 428 1664 453ZM1792 416C1792 328 1720 256 1632 256H160C72 256 0 328 0 416V1504C0 1592 72 1664 160 1664H1632C1720 1664 1792 1592 1792 1504Z"/></svg>
<span class="t" style="left:683.51px;top:1028px;font-size:14px;line-height:18px;color:#333;letter-spacing:-0.371px;">bekannt</span>
<span class="t" style="left:334.36px;top:1093px;font-size:12.5px;line-height:16px;color:#888;letter-spacing:-0.411px;">Branche(n):</span>
<div style="left:412px;top:1087.2px;width:154.8px;height:27.6px;background:#e2e2e2;border-radius:4px;"></div>
<span class="t" style="left:419.56px;top:1093px;font-size:12.5px;line-height:16px;color:#888;letter-spacing:-0.192px;">International und Weltweit</span>
<div style="left:312px;top:1137px;width:565px;height:1px;background:#ddd;"></div>
<svg style="left:696px;top:1152.25px;" width="14.8" height="11.1" viewBox="0 128 1879 1408" preserveAspectRatio="none"><path fill="#428bca" d="M1879 952C1879 907 1828 896 1792 896H704C616 896 498 950 440 1018L104 1414C88 1432 73 1456 73 1480C73 1525 124 1536 160 1536H1248C1336 1536 1454 1482 1512 1414L1848 1018C1864 1000 1879 976 1879 952ZM1536 608C1536 485 1435 384 1312 384H768V352C768 229 667 128 544 128H224C101 128 0 229 0 352V1312C0 1320 1 1329 1 1337L6 1331L343 935C424 839 579 768 704 768H1536Z"/></svg>
<a class="t" style="left:713.89px;top:1149px;font-size:14.5px;line-height:18px;color:#428bca;letter-spacing:-0.656px;">Anzeige in SalesConnect</a>
<aside style="left:878px;top:871px;width:547px;height:231px;background:#fff;border:1px solid #ddd;border-left:none;box-sizing:border-box;"></aside>
<div style="left:878px;top:872px;width:546px;height:38px;background:#f5f5f5;border-bottom:1px solid #ddd;"></div>
<div style="left:878px;top:1069px;width:546px;height:32px;background:#f5f5f5;border-top:1px solid #ddd;box-sizing:border-box;"></div>
<svg style="left:899px;top:885.2px;" width="12.6" height="10.8" viewBox="0 128 1792 1536" preserveAspectRatio="none"><path fill="#333" d="M1792 1248C1792 1195 1749 1152 1696 1152H1600V960C1600 890 1542 832 1472 832H960V640H1056C1109 640 1152 597 1152 544V224C1152 171 1109 128 1056 128H736C683 128 640 171 640 224V544C640 597 683 640 736 640H832V832H320C250 832 192 890 192 960V1152H96C43 1152 0 1195 0 1248V1568C0 1621 43 1664 96 1664H416C469 1664 512 1621 512 1568V1248C512 1195 469 1152 416 1152H320V960H832V1152H736C683 1152 640 1195 640 1248V1568C640 1621 683 1664 736 1664H1056C1109 1664 1152 1621 1152 1568V1248C1152 1195 1109 1152 1056 1152H960V960H1472V1152H1376C1323 1152 1280 1195 1280 1248V1568C1280 1621 1323 1664 1376 1664H1696C1749 1664 1792 1621 1792 1568Z"/></svg>
<span class="t" style="left:915.13px;top:882px;font-size:13.5px;line-height:17px;color:#333;letter-spacing:-0.447px;">Managementwechsel-Signal von dpa.com</span>
<span class="t" style="left:1360.20px;top:882px;font-size:11.5px;line-height:14px;color:#777;letter-spacing:-0.353px;">#5836547</span>
<a class="t" style="left:897.61px;top:929px;font-size:14px;line-height:18px;color:#428bca;font-weight:700;letter-spacing:-0.477px;-webkit-text-stroke:.0px;">dpa: Pressemitteilungen</a>
<p class="t" style="left:897.63px;top:957px;font-size:13.5px;line-height:17px;color:#777;letter-spacing:-0.064px;">(12.02.16) ...elben Zeitpunkt im dpa-Newsroom neuer Leiter der Panorama-Redaktion</p>
<p class="t" style="left:897.63px;top:976px;font-size:13.5px;line-height:17px;color:#777;letter-spacing:-0.093px;">wird. 12.02.16 › Louis Posern wird neuer Wirtschaftschef der dpa <b>Louis Posern,</b></p>
<p class="t" style="left:897.63px;top:995px;font-size:13.5px;line-height:17px;color:#666;letter-spacing:-0.346px;"><b>derzeit Multichannel-<span style="background:#fde29a;">Manager</span> der "Welt”, wird <span style="background:#fde29a;">neuer</span> Redaktionsleiter Wirtschaft der</b></p>
<p class="t" style="left:897.63px;top:1014px;font-size:13.5px;line-height:17px;color:#777;letter-spacing:-0.121px;"><b style="color:#666">Deutschen Presse-Agentur.</b> Der 39-Jährige folgt Mitte Mai als neuer Ressortleiter</p>
<p class="t" style="left:897.63px;top:1033px;font-size:13.5px;line-height:17px;color:#777;letter-spacing:-0.031px;">Antje Homburger, die seit Januar stellvertretende Chefredakteurin und Chefin Akt...</p>
<span class="t" style="left:1074.88px;top:1075px;font-size:15px;line-height:19px;color:#727272;font-weight:700;letter-spacing:-0.260px;">1 / 4 Signale</span>
<span class="t" style="left:1162.07px;top:1075px;font-size:15px;line-height:19px;color:#777;">-</span>
<a class="t" style="left:1170.17px;top:1075px;font-size:15px;line-height:19px;color:#428bca;letter-spacing:0.057px;">weiter</a>
<svg style="left:1215.25px;top:1078.6px;" width="13" height="13" viewBox="0 128 1536 1536" preserveAspectRatio="none"><path fill="#428bca" d="M1285 896C1285 913 1279 929 1267 941L1176 1032L814 1394C802 1406 786 1412 769 1412C752 1412 736 1406 724 1394L633 1303C621 1291 614 1275 614 1258C614 1241 621 1225 633 1213L822 1024H320C285 1024 256 995 256 960V832C256 797 285 768 320 768H822L633 579C621 567 615 551 615 534C615 517 621 501 633 489L724 398C736 386 752 380 769 380C786 380 802 386 814 398L1176 760L1267 851C1279 863 1285 879 1285 896ZM1536 896C1536 472 1192 128 768 128C344 128 0 472 0 896C0 1320 344 1664 768 1664C1192 1664 1536 1320 1536 896Z"/></svg>
</div>
</body></html>
